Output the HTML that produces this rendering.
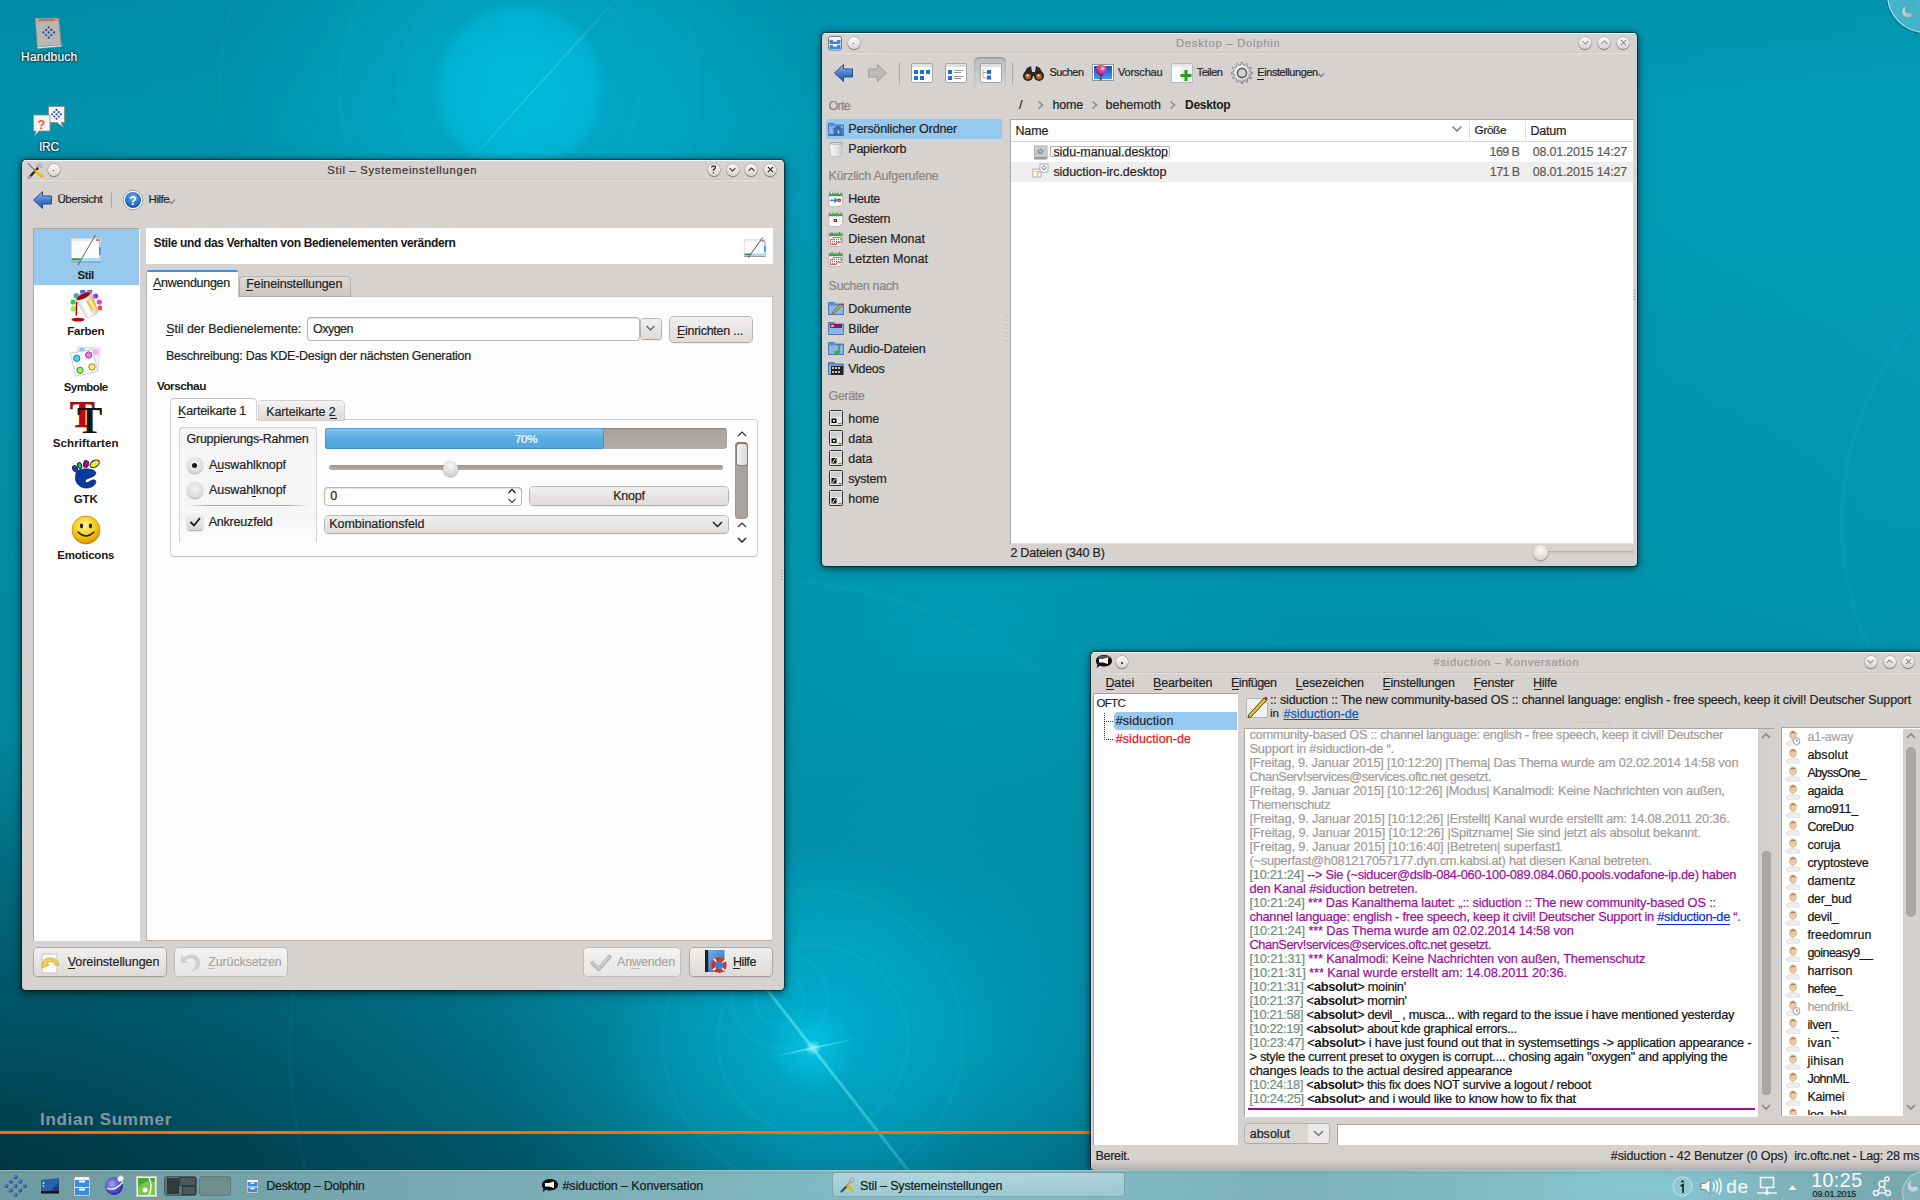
<!DOCTYPE html>
<html><head><meta charset="utf-8">
<style>
*{box-sizing:border-box;margin:0;padding:0}
html,body{width:1920px;height:1200px;overflow:hidden}
body{position:relative;font-family:"Liberation Sans",sans-serif;font-size:12px;color:#231f1e;
background:
 radial-gradient(circle 8px at 813px 1048px, rgba(170,250,255,.85), rgba(60,235,255,0)),
 radial-gradient(circle 45px at 813px 1048px, rgba(0,225,250,.45), rgba(0,220,250,0)),
 radial-gradient(circle 200px at 805px 1040px, rgba(0,195,232,.5), rgba(0,195,232,.25) 60%, rgba(0,195,232,0)),
 radial-gradient(circle 300px at 800px 1030px, rgba(0,190,228,.3), rgba(0,190,228,0)),
 radial-gradient(ellipse 330px 220px at 960px 640px, rgba(0,185,215,.22), rgba(0,185,215,0)),
 radial-gradient(ellipse 260px 300px at 990px 1040px, rgba(0,170,205,.45), rgba(0,170,205,0)),
 radial-gradient(circle 88px at 519px 88px, rgba(0,205,240,.45), rgba(0,205,240,.3) 85%, rgba(0,205,240,0) 100%),
 radial-gradient(ellipse 290px 250px at 519px 90px, rgba(0,195,230,.5), rgba(0,195,230,0)),
 radial-gradient(ellipse 640px 430px at 0px 1170px, rgba(0,22,30,.55), rgba(0,22,30,.28) 55%, rgba(0,22,30,0)),
 linear-gradient(180deg, rgba(0,0,0,0) 0, rgba(0,0,0,0) 1133px, rgba(0,10,20,.15) 1134px),
 linear-gradient(90deg, rgba(0,30,40,.07) 0%, rgba(0,30,40,0) 35%, rgba(0,0,0,0) 75%, rgba(60,210,235,.05) 100%),
 linear-gradient(180deg, #0093ad 0%, #0099b4 10%, #0095ae 40%, #008ea6 62%, #00849c 78%, #007890 90%, #006a7e 100%);
}
.a{position:absolute}
.t{position:absolute;white-space:nowrap;-webkit-text-stroke:0.2px currentColor}
.t[style*="bold"],.t b{-webkit-text-stroke:0}
.win{position:absolute;background:#d6d2d0;border-radius:4px;box-shadow:0 0 1px 1px rgba(0,0,0,.5),0 1px 6px 1px rgba(0,0,0,.45),0 3px 14px rgba(0,0,0,.25)}
.win:before{content:"";position:absolute;left:2px;top:0;right:2px;height:1px;background:rgba(255,255,255,.85)}
.tbsep{position:absolute;height:1px;background:linear-gradient(90deg,rgba(185,181,179,0),rgba(185,181,179,.55) 8%,rgba(185,181,179,.55) 92%,rgba(185,181,179,0))}
.tbsep:after{content:"";position:absolute;left:0;right:0;top:1px;height:1px;background:rgba(255,255,255,.35)}
.cb{position:absolute;width:12px;height:12px;border-radius:50%;background:linear-gradient(180deg,#fbfbfa 0,#eceae9 45%,#d5d1cf 100%);box-shadow:0 1px 1.2px rgba(0,0,0,.38),0 0 0 .7px rgba(125,120,117,.4)}
.btn{position:absolute;border-radius:4px;background:linear-gradient(180deg,#f1f0ef,#dedbd9);box-shadow:0 0 0 1px rgba(150,146,143,.65),0 1px 2px rgba(0,0,0,.18)}
.btnd{position:absolute;border-radius:4px;background:linear-gradient(180deg,#f3f2f1,#e8e6e5);box-shadow:0 0 0 1px rgba(170,166,163,.5)}
.inp{position:absolute;background:#fff;border-radius:3px;box-shadow:inset 0 1px 1px rgba(0,0,0,.12),0 0 0 1px rgba(160,156,153,.75)}
u{text-decoration:none;border-bottom:1px solid currentColor}
</style></head><body>
<div class="a" style="left:813px;top:1048px;width:520px;height:3px;margin-left:-260px;margin-top:-1.5px;transform:rotate(52deg);background:linear-gradient(90deg,rgba(120,240,255,0),rgba(120,240,255,.55) 50%,rgba(120,240,255,0))"></div>
<div class="a" style="left:813px;top:1048px;width:90px;height:2px;margin-left:-45px;margin-top:-1px;transform:rotate(-12deg);background:linear-gradient(90deg,rgba(150,250,255,0),rgba(150,250,255,.6) 50%,rgba(150,250,255,0))"></div>
<div class="a" style="left:718px;top:945px;width:190px;height:190px;border-radius:50%;box-shadow:0 0 3px 1px rgba(100,230,255,0.1), inset 0 0 3px 1px rgba(100,230,255,0.1)"></div>
<div class="a" style="left:663px;top:890px;width:300px;height:300px;border-radius:50%;box-shadow:0 0 3px 1px rgba(100,230,255,0.08), inset 0 0 3px 1px rgba(100,230,255,0.08)"></div>
<div class="a" style="left:732px;top:952px;width:96px;height:96px;border-radius:50%;box-shadow:0 0 3px 1px rgba(100,230,255,0.1), inset 0 0 3px 1px rgba(100,230,255,0.1)"></div>
<div class="a" style="left:755px;top:975px;width:50px;height:50px;border-radius:50%;box-shadow:0 0 3px 1px rgba(100,230,255,0.1), inset 0 0 3px 1px rgba(100,230,255,0.1)"></div>
<div class="a" style="left:290px;top:580px;width:940px;height:940px;border-radius:50%;box-shadow:0 0 3px 1px rgba(100,230,255,0.07), inset 0 0 3px 1px rgba(100,230,255,0.07)"></div>
<div class="a" style="left:220px;top:-212px;width:600px;height:600px;border-radius:50%;box-shadow:0 0 3px 1px rgba(100,230,255,0.05), inset 0 0 3px 1px rgba(100,230,255,0.05)"></div>
<div class="a" style="left:542px;top:80px;width:230px;height:1.5px;margin-left:-115px;transform:rotate(-47.8deg);background:linear-gradient(90deg,rgba(90,220,250,0),rgba(90,220,250,.32) 30%,rgba(90,220,250,.32) 70%,rgba(90,220,250,0))"></div>
<div class="a" style="left:339px;top:-92px;width:360px;height:360px;border-radius:50%;box-shadow:0 0 4px 1px rgba(100,230,255,0.07), inset 0 0 4px 1px rgba(100,230,255,0.07)"></div>
<div class="a" style="left:399px;top:-32px;width:240px;height:240px;border-radius:50%;box-shadow:0 0 4px 1px rgba(100,230,255,0.06), inset 0 0 4px 1px rgba(100,230,255,0.06)"></div>
<div class="a" style="left:1842px;top:214px;width:616px;height:616px;border-radius:50%;box-shadow:0 0 3px 1px rgba(100,220,245,.10), inset 0 0 3px 1px rgba(100,220,245,.10)"></div>
<div class="a" style="left:0;top:1131px;width:1920px;height:3px;background:#ff6c00"></div>
<div class="t" style="left:40.00px;top:1111.20px;font-size:17px;line-height:17px;font-weight:bold;color:#8796a3;letter-spacing:0.707px;">Indian Summer</div>
<div class="win" style="left:22px;top:160px;width:762px;height:830px"></div>
<div class="tbsep" style="left:30px;top:179px;width:746px"></div>
<svg class="a" style="left:27px;top:162px" width="18" height="18" viewBox="0 0 18 18">
<path d="M1 1.3 L8 8.3" stroke="#9a9a9a" stroke-width="1.1"/><path d="M1.3 1.6 L7.5 7.8" stroke="#333" stroke-width=".5"/>
<path d="M10.6 6.4 L2 15.6" stroke="#2a2a2a" stroke-width="2.3" stroke-linecap="round"/><path d="M3 14.6 L2 15.6" stroke="#aaa" stroke-width="2.3" stroke-linecap="round"/>
<path d="M10.2 5.2 A2.6 2.6 0 1 1 14.6 5.6 L13 5 L12.6 3.2 Z" fill="#d8d8d8" stroke="#8a8a8a" stroke-width=".7"/>
<path d="M8.6 9 L15 14.3" stroke="#e8b400" stroke-width="2.8" stroke-linecap="round"/><path d="M9.5 9.3 L14.5 13.4" stroke="#ffe060" stroke-width=".8" stroke-linecap="round"/>
</svg>
<div class="cb" style="left:47.50px;top:163.60px"></div><div class="a" style="left:52.60px;top:169.70px;width:1.8px;height:1.8px;border-radius:50%;background:#1a1a1a"></div>
<div class="t" style="left:327.30px;top:164.60px;font-size:11.2px;line-height:11.2px;color:#3a3130;letter-spacing:0.722px;">Stil – Systemeinstellungen</div>
<div class="cb" style="left:707.60px;top:163.50px"></div><svg class="a" style="left:707.10px;top:163.00px" width="13" height="13"><path d="M4.6 4.6 Q4.8 2.8 6.6 2.8 Q8.5 2.9 8.4 4.6 Q8.3 5.7 6.9 6.4 Q6.4 6.8 6.4 7.8 M6.4 9.2 L6.4 10.2" fill="none" stroke="#2a2a2a" stroke-width="1.35"/></svg>
<div class="cb" style="left:726.60px;top:163.50px"></div><svg class="a" style="left:726.10px;top:163.00px" width="13" height="13"><path d="M3.6 5.2 L6.5 8.1 L9.4 5.2" fill="none" stroke="#2a2a2a" stroke-width="1.05"/></svg>
<div class="cb" style="left:745.30px;top:163.50px"></div><svg class="a" style="left:744.80px;top:163.00px" width="13" height="13"><path d="M3.6 7.8 L6.5 4.9 L9.4 7.8" fill="none" stroke="#2a2a2a" stroke-width="1.05"/></svg>
<div class="cb" style="left:764.30px;top:163.50px"></div><svg class="a" style="left:763.80px;top:163.00px" width="13" height="13"><path d="M3.9 3.9 L9.1 9.1 M9.1 3.9 L3.9 9.1" fill="none" stroke="#2a2a2a" stroke-width="1.05"/></svg>
<svg class="a" style="left:32px;top:190px" width="21" height="20" viewBox="0 0 21 20">
<defs><linearGradient id="gArr" x1="0" y1="0" x2="0" y2="1"><stop offset="0" stop-color="#9cc0ee"/><stop offset=".5" stop-color="#4a7fcf"/><stop offset="1" stop-color="#1d4f9c"/></linearGradient></defs>
<path d="M1.5 10 L10.5 1.5 L10.5 6 L19.5 6 L19.5 14 L10.5 14 L10.5 18.5 Z" fill="url(#gArr)" stroke="#2a4f86" stroke-width="1"/>
</svg>
<div class="t" style="left:57.40px;top:193.65px;font-size:11.5px;line-height:11.5px;letter-spacing:-0.398px;">Übersicht</div>
<div class="a" style="left:111px;top:189px;width:1px;height:22px;background:linear-gradient(180deg,rgba(160,155,152,0),#a9a5a2 30%,#a9a5a2 70%,rgba(160,155,152,0))"></div>
<svg class="a" style="left:122px;top:189px" width="22" height="22" viewBox="0 0 22 22">
<defs><radialGradient id="gHelp" cx=".5" cy=".35" r=".6"><stop offset="0" stop-color="#6fb2f2"/><stop offset="1" stop-color="#1358b7"/></radialGradient></defs>
<circle cx="11" cy="11" r="9.8" fill="#fff" stroke="#8a8a8a" stroke-width=".8"/>
<circle cx="11" cy="11" r="8" fill="url(#gHelp)"/>
<text x="11" y="15.5" font-family="Liberation Sans" font-weight="bold" font-size="12" fill="#fff" text-anchor="middle">?</text>
</svg>
<div class="t" style="left:148.60px;top:193.65px;font-size:11.5px;line-height:11.5px;letter-spacing:-0.503px;">Hilfe</div>
<svg class="a" style="left:168px;top:199px" width="8" height="6"><path d="M1 2 L3.5 4.5 L7 .5" fill="none" stroke="#777" stroke-width="1.1"/></svg>
<div class="a" style="left:33px;top:228px;width:107px;height:713px;background:#fff;box-shadow:inset 1px 1px 0 #a6a8a5"></div>
<div class="a" style="left:34px;top:229px;width:105px;height:56px;background:#97c8ee"></div>
<div class="t" style="left:77.45px;top:269.95px;font-size:11.5px;line-height:11.5px;font-weight:bold;color:#1a1716;letter-spacing:-0.348px;">Stil</div>
<div class="t" style="left:67.20px;top:325.95px;font-size:11.5px;line-height:11.5px;font-weight:bold;color:#1a1716;letter-spacing:-0.224px;">Farben</div>
<div class="t" style="left:63.70px;top:381.95px;font-size:11.5px;line-height:11.5px;font-weight:bold;color:#1a1716;letter-spacing:-0.562px;">Symbole</div>
<div class="t" style="left:52.70px;top:437.95px;font-size:11.5px;line-height:11.5px;font-weight:bold;color:#1a1716;letter-spacing:0.121px;">Schriftarten</div>
<div class="t" style="left:73.70px;top:493.95px;font-size:11.5px;line-height:11.5px;font-weight:bold;color:#1a1716;letter-spacing:-0.094px;">GTK</div>
<div class="t" style="left:57.20px;top:549.95px;font-size:11.5px;line-height:11.5px;font-weight:bold;color:#1a1716;letter-spacing:-0.200px;">Emoticons</div>
<svg class="a" style="left:70px;top:234px" width="32" height="32" viewBox="0 0 32 32">
<rect x="1.2" y="4.6" width="29.6" height="23" fill="#fbfbfb" stroke="#cfcfcf" stroke-width=".7"/>
<rect x="1.5" y="4.9" width="29" height="2.3" fill="#ececec"/><rect x="26" y="5.2" width="4" height="1.6" fill="#e05a5a"/>
<rect x="29" y="7.2" width="1.8" height="19.5" fill="#a8cfee"/><rect x="29" y="13" width="1.8" height="8" fill="#4a90d8"/>
<rect x="1.5" y="24" width="29" height="3.4" fill="#a8dcf4"/><rect x="1.5" y="24.3" width="9" height="2" fill="#3a9a3a"/>
<rect x="1.2" y="27.4" width="29.6" height="1" fill="#8a8a8a"/>
<line x1="8" y1="31" x2="25.5" y2="1" stroke="#555" stroke-width=".9"/>
</svg>
<svg class="a" style="left:70px;top:290px" width="32" height="32" viewBox="0 0 32 32">
<defs><linearGradient id="gBk" x1="0" y1="0" x2="1" y2="0"><stop offset="0" stop-color="#d8d8d8"/><stop offset=".35" stop-color="#ffffff"/><stop offset="1" stop-color="#bdbdbd"/></linearGradient>
<linearGradient id="gGold" x1="0" y1="0" x2="1" y2="0"><stop offset="0" stop-color="#e8b010"/><stop offset=".5" stop-color="#fff0b0"/><stop offset="1" stop-color="#d8a000"/></linearGradient></defs>
<circle cx="12.7" cy="1.8" r="2.6" fill="#4a60e0"/><circle cx="19.7" cy="1.8" r="2.6" fill="#7a48d0"/><circle cx="25.7" cy="6" r="2.6" fill="#9040c8"/><circle cx="29.3" cy="12" r="2.6" fill="#d848c8"/><circle cx="30" cy="18" r="2.4" fill="#f04848"/>
<circle cx="6.3" cy="5.7" r="2.6" fill="#30b0b0"/><circle cx="3" cy="12" r="2.6" fill="#30d040"/><circle cx="3.2" cy="18.7" r="2.6" fill="#a0f040"/>
<g transform="translate(13.3,5.7) rotate(-25.6)">
<path d="M-8.5 0 L-6.8 20 A6.8 2.4 0 0 0 6.8 20 L8.5 0 Z" fill="url(#gBk)" stroke="#b8b8b8" stroke-width=".5"/>
<path d="M0.5 6 L8 6 L7 17.5 L1 17.5 Z" fill="url(#gGold)"/>
<ellipse cx="0" cy="0" rx="8.5" ry="3" fill="#a8a8a8"/><ellipse cx="0" cy=".4" rx="7.4" ry="2.4" fill="#a00010"/>
</g>
<path d="M6.6 12.5 L6.3 25" stroke="#b00010" stroke-width="1.5" stroke-linecap="round"/>
<ellipse cx="8" cy="29.6" rx="6.5" ry="1.9" fill="#c00010"/>
</svg>
<svg class="a" style="left:70px;top:346px" width="32" height="32" viewBox="0 0 32 32">
<path d="M7.3 1 L30.3 2 L28 25.3 L10 26 Z" fill="#f2f2f2" stroke="#d0d0d0" stroke-width=".7"/>
<circle cx="12" cy="4.5" r="3" fill="#6ab8f0" opacity=".7"/><circle cx="25.7" cy="6" r="3" fill="#f0b0f0"/>
<path d="M.3 7 L22.7 3.7 L27.7 25.3 L5.7 30.3 Z" fill="#fbfbfb" stroke="#c4c4c4" stroke-width=".8"/>
<circle cx="6.7" cy="12.3" r="3.2" fill="#48d0f8" stroke="#2060a0" stroke-width=".8"/>
<circle cx="18.7" cy="9" r="3.2" fill="#f070f0" stroke="#803080" stroke-width=".8"/>
<circle cx="10" cy="24.3" r="3.2" fill="#98f060" stroke="#407020" stroke-width=".8"/>
<circle cx="22" cy="21" r="3.2" fill="#f8f070" stroke="#707020" stroke-width=".8"/>
</svg>
<svg class="a" style="left:70px;top:402px" width="32" height="32" viewBox="0 0 32 32">
<text x="0" y="25.3" font-family="Liberation Serif" font-weight="bold" font-size="37" fill="#c40810" stroke="#6a0000" stroke-width=".6">T</text>
<text x="7" y="30.8" font-family="Liberation Serif" font-weight="bold" font-size="38" fill="#151515">T</text>
</svg>
<svg class="a" style="left:70px;top:458px" width="32" height="32" viewBox="0 0 32 32">
<path d="M6 15 C6.5 10 23 9.5 25.5 14 C27.5 18 19.5 19.5 16.8 21 C14.3 22.4 15 25.6 18.2 24.2 C20 23.3 22 21.6 24.5 22 C27.5 23 25.5 28.5 18.5 29.8 C11.5 31 4.8 26 5.6 19 Z" fill="#0a3aa0" stroke="#001a80" stroke-width=".8"/>
<ellipse cx="5" cy="10.5" rx="2.3" ry="3" transform="rotate(-30 5 10.5)" fill="#443880" stroke="#1a1a90" stroke-width="1"/>
<ellipse cx="9.6" cy="7.6" rx="2.1" ry="3" transform="rotate(-15 9.6 7.6)" fill="#20c030" stroke="#1a1a90" stroke-width="1"/>
<ellipse cx="16" cy="6" rx="2.5" ry="3.4" transform="rotate(10 16 6)" fill="#d00060" stroke="#1a1a90" stroke-width="1"/>
<ellipse cx="24.7" cy="5.8" rx="5" ry="3.2" transform="rotate(-32 24.7 5.8)" fill="#f8f000" stroke="#101080" stroke-width="1.1"/>
</svg>
<svg class="a" style="left:70px;top:514px" width="32" height="32" viewBox="0 0 32 32">
<defs><radialGradient id="gSm" cx=".45" cy=".35" r=".65"><stop offset="0" stop-color="#fff6a0"/><stop offset=".6" stop-color="#f5cc10"/><stop offset="1" stop-color="#d89000"/></radialGradient></defs>
<circle cx="16" cy="16" r="14" fill="url(#gSm)" stroke="#b07800" stroke-width=".6"/>
<ellipse cx="11.5" cy="12" rx="1.6" ry="2.4" fill="#222"/><ellipse cx="20.5" cy="12" rx="1.6" ry="2.4" fill="#222"/>
<path d="M8 18 Q16 26 24 18" fill="none" stroke="#222" stroke-width="1.6" stroke-linecap="round"/>
</svg>
<div class="a" style="left:146px;top:228px;width:627px;height:36px;background:#fff"></div>
<div class="t" style="left:153.50px;top:236.70px;font-size:12px;line-height:12px;font-weight:bold;color:#1a1716;letter-spacing:-0.354px;">Stile und das Verhalten von Bedienelementen verändern</div>
<svg class="a" style="left:743px;top:236px" width="24" height="22" viewBox="0 0 24 22">
<rect x="1.2" y="3.8" width="21.6" height="16.6" fill="#fbfbfb" stroke="#d0d0d0" stroke-width=".7"/>
<rect x="1.5" y="4" width="21" height="1.6" fill="#ececec"/><rect x="18.5" y="4.2" width="3.2" height="1.3" fill="#e05a5a"/>
<rect x="21" y="5.6" width="1.6" height="14.5" fill="#a8cfee"/><rect x="21" y="10" width="1.6" height="6" fill="#4a90d8"/>
<rect x="1.5" y="17.4" width="21" height="2.6" fill="#a8dcf4"/><rect x="1.5" y="17.6" width="6" height="1.6" fill="#3a9a3a"/>
<rect x="1.2" y="20" width="21.6" height=".8" fill="#8a8a8a"/>
<line x1="5.2" y1="21.8" x2="19.8" y2="1.2" stroke="#444" stroke-width=".9"/></svg>
<div class="a" style="left:146px;top:296px;width:627px;height:645px;background:#fcfcfc;box-shadow:inset 1px 0 0 #b9b5b3, inset 0 1px 0 #c9c5c3, inset -1px 0 0 #c9c5c3, inset 0 -1px 0 #b5b1ae"></div>
<div class="a" style="left:239px;top:276px;width:112px;height:21px;border-radius:4px 4px 0 0;background:linear-gradient(180deg,#dedbd9,#c9c5c3);box-shadow:inset 0 0 0 1px rgba(150,146,143,.55)"></div>
<div class="a" style="left:146px;top:270px;width:93px;height:27px;border-radius:4px 4px 0 0;background:linear-gradient(180deg,#fff,#fcfcfc);box-shadow:inset 1px 0 0 #b9b5b3, inset -1px 0 0 #c9c5c3"></div>
<div class="a" style="left:147px;top:270px;width:91px;height:2px;border-radius:3px 3px 0 0;background:#3d8de0"></div>
<div class="t" style="left:153.00px;top:277.35px;font-size:12.5px;line-height:12.5px;letter-spacing:-0.267px;">Anwendungen</div>
<div class="a" style="left:153px;top:289px;width:8px;height:1px;background:#222"></div>
<div class="t" style="left:246.30px;top:277.95px;font-size:12.5px;line-height:12.5px;letter-spacing:-0.118px;">Feineinstellungen</div>
<div class="a" style="left:246px;top:290px;width:7px;height:1px;background:#222"></div>
<div class="t" style="left:166.30px;top:323.35px;font-size:12.5px;line-height:12.5px;letter-spacing:-0.050px;">Stil der Bedienelemente:</div>
<div class="a" style="left:166px;top:335px;width:7px;height:1px;background:#222"></div>
<div class="inp" style="left:308px;top:318px;width:331px;height:22px"></div>
<div class="t" style="left:313.00px;top:323.35px;font-size:12.5px;line-height:12.5px;letter-spacing:-0.516px;">Oxygen</div>
<div class="btn" style="left:640.5px;top:318.5px;width:20px;height:20px;border-radius:3px"></div>
<svg class="a" style="left:644px;top:323px" width="13" height="10"><path d="M2.5 3 L6.5 7 L10.5 3" fill="none" stroke="#666" stroke-width="1.4"/></svg>
<div class="btn" style="left:669.5px;top:316.5px;width:82px;height:25px"></div>
<div class="t" style="left:676.90px;top:324.65px;font-size:12.5px;line-height:12.5px;letter-spacing:-0.249px;">Einrichten ...</div>
<div class="a" style="left:677px;top:337px;width:7px;height:1px;background:#222"></div>
<div class="t" style="left:166.00px;top:350.25px;font-size:12.5px;line-height:12.5px;letter-spacing:-0.268px;">Beschreibung: Das KDE-Design der nächsten Generation</div>
<div class="t" style="left:156.90px;top:381.40px;font-size:11.8px;line-height:11.8px;font-weight:bold;color:#1a1716;letter-spacing:-0.486px;">Vorschau</div>
<div class="a" style="left:170.5px;top:420px;width:586px;height:136px;background:#fdfdfd;border-radius:0 3px 3px 3px;box-shadow:0 0 0 1px rgba(175,171,168,.55),0 1px 1px rgba(0,0,0,.15)"></div>
<div class="a" style="left:258.7px;top:400.6px;width:85px;height:19.5px;border-radius:4px 4px 0 0;background:linear-gradient(180deg,#f5f4f3,#dcd9d7);box-shadow:0 0 0 1px rgba(175,171,168,.55)"></div>
<div class="a" style="left:170.6px;top:398.7px;width:85px;height:22.5px;border-radius:4px 4px 0 0;background:#fdfdfd;box-shadow:-1px -1px 0 0 rgba(175,171,168,.5),1px -1px 0 0 rgba(175,171,168,.5)"></div>
<div class="t" style="left:178.10px;top:405.35px;font-size:12.5px;line-height:12.5px;letter-spacing:-0.221px;">Karteikarte 1</div>
<div class="a" style="left:178px;top:417px;width:7px;height:1px;background:#222"></div>
<div class="t" style="left:266.20px;top:405.65px;font-size:12.5px;line-height:12.5px;letter-spacing:-0.113px;">Karteikarte 2</div>
<div class="a" style="left:330px;top:418px;width:7px;height:1px;background:#222"></div>
<div class="a" style="left:178.6px;top:427.3px;width:138.7px;height:115px;border-radius:4px 4px 0 0;background:linear-gradient(180deg,#f6f5f5 0,#f7f6f6 80%,rgba(250,250,250,0) 100%);box-shadow:inset 1px 1px 0 rgba(190,186,183,.6), inset -1px 0 0 rgba(190,186,183,.6)"></div>
<div class="t" style="left:186.60px;top:433.45px;font-size:12.5px;line-height:12.5px;letter-spacing:-0.282px;">Gruppierungs-Rahmen</div>
<div class="a" style="left:186.5px;top:457.3px;width:16px;height:16px;border-radius:50%;background:radial-gradient(circle at 50% 40%,#f4f3f2 0,#dcd8d6 70%,#c9c5c3 100%);box-shadow:0 1px 1.5px rgba(0,0,0,.35)"></div>
<div class="a" style="left:191.9px;top:462.7px;width:5.2px;height:5.2px;border-radius:50%;background:#151515"></div>
<div class="a" style="left:186.5px;top:482.3px;width:16px;height:16px;border-radius:50%;background:radial-gradient(circle at 50% 40%,#f4f3f2 0,#dcd8d6 70%,#c9c5c3 100%);box-shadow:0 1px 1.5px rgba(0,0,0,.35)"></div>
<div class="t" style="left:209.00px;top:459.05px;font-size:12.5px;line-height:12.5px;letter-spacing:-0.069px;">Auswahlknopf</div>
<div class="a" style="left:216px;top:471px;width:7px;height:1px;background:#222"></div>
<div class="t" style="left:209.00px;top:483.75px;font-size:12.5px;line-height:12.5px;letter-spacing:-0.069px;">Auswahlknopf</div>
<div class="a" style="left:252px;top:496px;width:4px;height:1px;background:#222"></div>
<div class="a" style="left:186px;top:505px;width:124px;height:1px;background:linear-gradient(90deg,rgba(150,146,143,0),rgba(150,146,143,.8) 20%,rgba(150,146,143,.8) 80%,rgba(150,146,143,0))"></div>
<div class="a" style="left:186.5px;top:514px;width:16px;height:15.5px;border-radius:3px;background:linear-gradient(180deg,#f3f2f1,#d9d5d3);box-shadow:0 1px 1.5px rgba(0,0,0,.35)"></div>
<svg class="a" style="left:187px;top:514px" width="16" height="16"><path d="M3.5 8 L7 11.5 L13 4" fill="none" stroke="#1a1a1a" stroke-width="1.8"/></svg>
<div class="t" style="left:208.70px;top:516.25px;font-size:12.5px;line-height:12.5px;letter-spacing:-0.201px;">Ankreuzfeld</div>
<div class="a" style="left:325.3px;top:428.3px;width:401.5px;height:20.5px;border-radius:3px;background:linear-gradient(180deg,#a8a19e,#b3adaa);box-shadow:inset 0 1px 1px rgba(0,0,0,.2)"></div>
<div class="a" style="left:325.3px;top:428.3px;width:279px;height:20.5px;border-radius:3px;background:linear-gradient(180deg,#8cc6ee 0,#5aaee2 45%,#50a4dc 100%);box-shadow:inset 0 0 0 1px rgba(40,120,190,.5)"></div>
<div class="t" style="left:514.90px;top:433.85px;font-size:11.5px;line-height:11.5px;color:#fff;letter-spacing:-0.177px;">70%</div>
<div class="a" style="left:329px;top:465px;width:394px;height:5px;border-radius:3px;background:linear-gradient(180deg,#9c9692,#b5b0ad);box-shadow:0 1px 0 rgba(255,255,255,.6)"></div>
<div class="a" style="left:443px;top:460.5px;width:15px;height:15px;border-radius:50%;background:radial-gradient(circle at 50% 35%,#fafafa,#d4d0ce 75%);box-shadow:0 1px 2px rgba(0,0,0,.4)"></div>
<div class="inp" style="left:325.3px;top:487.5px;width:196px;height:17px"></div>
<div class="t" style="left:330.30px;top:490.15px;font-size:12.5px;line-height:12.5px;letter-spacing:0.047px;">0</div>
<svg class="a" style="left:506px;top:487px" width="12" height="18"><path d="M2.5 6 L6 2.5 L9.5 6" fill="none" stroke="#222" stroke-width="1.3"/><path d="M2.5 12 L6 15.5 L9.5 12" fill="none" stroke="#444" stroke-width="1.1"/></svg>
<div class="btn" style="left:529.5px;top:487px;width:198px;height:17.5px"></div>
<div class="t" style="left:613.20px;top:490.25px;font-size:12.5px;line-height:12.5px;letter-spacing:-0.234px;">Knopf</div>
<div class="btn" style="left:324.5px;top:516.3px;width:403px;height:17px"></div>
<div class="t" style="left:329.20px;top:517.95px;font-size:12.5px;line-height:12.5px;letter-spacing:-0.038px;">Kombinationsfeld</div>
<svg class="a" style="left:711px;top:519px" width="13" height="10"><path d="M2 3 L6.5 7.5 L11 3" fill="none" stroke="#222" stroke-width="1.5"/></svg>
<svg class="a" style="left:736px;top:429px" width="12" height="10"><path d="M2 7 L6 3 L10 7" fill="none" stroke="#333" stroke-width="1.2"/></svg>
<div class="a" style="left:735.4px;top:442.2px;width:12.5px;height:77px;border-radius:4px;background:#aaa39f;box-shadow:inset 0 1px 2px rgba(0,0,0,.3)"></div>
<div class="a" style="left:737px;top:443.5px;width:9.5px;height:21px;border-radius:3px;background:linear-gradient(90deg,#f5f4f3,#dcd9d7);box-shadow:0 0 0 1px rgba(100,95,92,.5)"></div>
<svg class="a" style="left:736px;top:520px" width="12" height="10"><path d="M2 7 L6 3 L10 7" fill="none" stroke="#333" stroke-width="1.2"/></svg>
<svg class="a" style="left:736px;top:535px" width="12" height="10"><path d="M2 3 L6 7 L10 3" fill="none" stroke="#222" stroke-width="1.5"/></svg>
<div class="a" style="left:781px;top:570px;width:1px;height:12px;background:repeating-linear-gradient(180deg,#8a8683 0,#8a8683 1px,transparent 1px,transparent 3px)"></div>
<div class="btn" style="left:34.2px;top:948px;width:131.5px;height:27.8px"></div>
<svg class="a" style="left:39px;top:951px" width="24" height="24" viewBox="0 0 24 24">
<rect x="3" y="3" width="15" height="19" fill="#fafafa" stroke="#bbb" stroke-width=".8"/>
<path d="M3 13 Q5 6 12 7 Q19 8 20 14 L16 14 Q15 10 11 10.5 Q8 11 8 13 L10 14 L3 17 Z" fill="#ecd060" stroke="#c8a020" stroke-width=".7"/>
</svg>
<div class="t" style="left:67.70px;top:956.15px;font-size:12.5px;line-height:12.5px;letter-spacing:-0.046px;">Voreinstellungen</div>
<div class="a" style="left:68px;top:968px;width:7px;height:1px;background:#222"></div>
<div class="btnd" style="left:174.6px;top:948px;width:112.8px;height:27.8px"></div>
<svg class="a" style="left:179px;top:950px" width="26" height="24" viewBox="0 0 26 24">
<path d="M2 5 L2 13 L9 13 L6.5 10.5 Q10 7 14 9 Q18 11 16 17 Q15 20 12 21 Q19 21 21 15 Q22 8 16 5 Q10 3 5 7.5 Z" fill="#d2d0ce"/>
</svg>
<div class="t" style="left:208.30px;top:956.15px;font-size:12.5px;line-height:12.5px;color:#a9a5a3;letter-spacing:-0.153px;">Zurücksetzen</div>
<div class="a" style="left:208px;top:968px;width:7px;height:1px;background:#bbb"></div>
<div class="btnd" style="left:584px;top:948px;width:96px;height:27.8px"></div>
<svg class="a" style="left:590px;top:952px" width="22" height="20"><path d="M2.5 11 L8.5 17 L19.5 5" fill="none" stroke="#bdbbb9" stroke-width="4.2" stroke-linecap="round" stroke-linejoin="round"/><path d="M3 10.5 L8.5 16 L19 4.8" fill="none" stroke="#d4d2d0" stroke-width="1.5" stroke-linecap="round"/></svg>
<div class="t" style="left:617.00px;top:956.15px;font-size:12.5px;line-height:12.5px;color:#a9a5a3;letter-spacing:-0.135px;">Anwenden</div>
<div class="a" style="left:631px;top:968px;width:9px;height:1px;background:#bbb"></div>
<div class="btn" style="left:689.6px;top:948px;width:82px;height:27.8px"></div>
<svg class="a" style="left:704px;top:949px" width="24" height="25" viewBox="0 0 24 25">
<defs><linearGradient id="gBook" x1="0" y1="0" x2="1" y2="1"><stop offset="0" stop-color="#7ab4ea"/><stop offset="1" stop-color="#2a6ab8"/></linearGradient></defs>
<rect x="1" y="1" width="19.5" height="22" fill="url(#gBook)"/><rect x="1" y="1" width="3.2" height="22" fill="#1e1e1e"/>
<circle cx="15" cy="16" r="6" fill="#3a80c8"/>
<circle cx="15" cy="16" r="6" fill="none" stroke="#d83020" stroke-width="3.4"/>
<circle cx="15" cy="16" r="6" fill="none" stroke="#f4f4f4" stroke-width="3.6" stroke-dasharray="1.6 7.82" stroke-dashoffset="5.5"/>
</svg>
<div class="t" style="left:733.00px;top:956.15px;font-size:12.5px;line-height:12.5px;letter-spacing:-0.403px;">Hilfe</div>
<div class="a" style="left:733px;top:968px;width:7px;height:1px;background:#222"></div>
<div class="win" style="left:822px;top:33px;width:815px;height:533px"></div>
<div class="tbsep" style="left:830px;top:52px;width:799px"></div>
<svg class="a" style="left:827px;top:35px" width="16" height="16" viewBox="0 0 16 16">
<rect x="1.5" y="1.5" width="13" height="13.5" rx="2" fill="#f4f4f4" stroke="#7a7a7a"/>
<rect x="2.5" y="5" width="11" height="4" fill="#3a86e0"/><rect x="2.5" y="10" width="11" height="4" fill="#3a86e0"/>
<rect x="6" y="5" width="4" height="1.5" fill="#fff"/><rect x="6" y="10" width="4" height="1.5" fill="#fff"/></svg>
<div class="cb" style="left:847.50px;top:36.60px"></div><div class="a" style="left:852.60px;top:42.70px;width:1.8px;height:1.8px;border-radius:50%;background:#1a1a1a"></div>
<div class="t" style="left:1176.00px;top:37.60px;font-size:11.2px;line-height:11.2px;color:#9a9693;letter-spacing:0.769px;">Desktop – Dolphin</div>
<div class="cb" style="left:1579.40px;top:36.60px"></div><svg class="a" style="left:1578.90px;top:36.10px" width="13" height="13"><path d="M3.6 5.2 L6.5 8.1 L9.4 5.2" fill="none" stroke="#8d8986" stroke-width="1.05"/></svg>
<div class="cb" style="left:1598.20px;top:36.60px"></div><svg class="a" style="left:1597.70px;top:36.10px" width="13" height="13"><path d="M3.6 7.8 L6.5 4.9 L9.4 7.8" fill="none" stroke="#8d8986" stroke-width="1.05"/></svg>
<div class="cb" style="left:1617.30px;top:36.60px"></div><svg class="a" style="left:1616.80px;top:36.10px" width="13" height="13"><path d="M3.9 3.9 L9.1 9.1 M9.1 3.9 L3.9 9.1" fill="none" stroke="#8d8986" stroke-width="1.05"/></svg>
<svg class="a" style="left:833px;top:63px" width="21" height="20" viewBox="0 0 21 20">
<path d="M1.5 10 L10.5 1.5 L10.5 6 L19.5 6 L19.5 14 L10.5 14 L10.5 18.5 Z" fill="url(#gArr)" stroke="#2a4f86" stroke-width="1"/></svg>
<svg class="a" style="left:867px;top:63px" width="21" height="20" viewBox="0 0 21 20">
<path d="M19.5 10 L10.5 1.5 L10.5 6 L1.5 6 L1.5 14 L10.5 14 L10.5 18.5 Z" fill="#bdbab8" stroke="#a19e9c" stroke-width="1"/></svg>
<div class="a" style="left:899px;top:62px;width:1px;height:22px;background:#aaa6a3"></div>
<div class="a" style="left:1012px;top:62px;width:1px;height:22px;background:#aaa6a3"></div>
<div class="a" style="left:974px;top:56.5px;width:31.5px;height:32px;border-radius:5px;background:linear-gradient(180deg,#b9bdbb,#d9d6d4);box-shadow:inset 0 1px 2px rgba(0,0,0,.25)"></div>
<svg class="a" style="left:911px;top:63px" width="22" height="20" viewBox="0 0 22 20"><rect x=".5" y=".5" width="21" height="19" rx="1.5" fill="#fff" stroke="#a5a5a5"/><rect x="1" y="1" width="20" height="3" fill="#e0e0e0"/><rect x="3" y="7" width="4" height="4" fill="#1f6fd8"/><rect x="9" y="7" width="4" height="4" fill="#1f6fd8"/><rect x="15" y="7" width="4" height="4" fill="#1f6fd8"/><rect x="3" y="13" width="4" height="4" fill="#1f6fd8"/><rect x="9" y="13" width="4" height="4" fill="#1f6fd8"/></svg>
<svg class="a" style="left:945px;top:63px" width="22" height="20" viewBox="0 0 22 20"><rect x=".5" y=".5" width="21" height="19" rx="1.5" fill="#fff" stroke="#a5a5a5"/><rect x="1" y="1" width="20" height="3" fill="#e0e0e0"/><rect x="3" y="7" width="4" height="4" fill="#1f6fd8"/><rect x="9" y="7" width="9" height="1" fill="#999"/><rect x="9" y="9" width="7" height="1" fill="#999"/><rect x="3" y="13" width="4" height="4" fill="#1f6fd8"/><rect x="9" y="13" width="9" height="1" fill="#999"/><rect x="9" y="15" width="7" height="1" fill="#999"/></svg>
<svg class="a" style="left:979.5px;top:63px" width="22" height="20" viewBox="0 0 22 20"><rect x=".5" y=".5" width="21" height="19" rx="1.5" fill="#fff" stroke="#a5a5a5"/><rect x="1" y="1" width="20" height="3" fill="#e0e0e0"/><path d="M3 6 V15 H7 M3 9.5 H7" fill="none" stroke="#999" stroke-width=".8"/><rect x="7" y="7" width="4" height="4" fill="#1f6fd8"/><rect x="7" y="12.5" width="4" height="4" fill="#1f6fd8"/></svg>
<svg class="a" style="left:1022px;top:64px" width="23" height="18" viewBox="0 0 23 18">
<path d="M5 4 L9 2 L10 8 L13 8 L14 2 L18 4 L22 12 L14 12 L9 12 L1 12 Z" fill="#2a2a2a"/>
<circle cx="6" cy="12" r="5" fill="#222"/><circle cx="17" cy="12" r="5" fill="#222"/>
<circle cx="6" cy="12.5" r="3" fill="#b06020"/><circle cx="17" cy="12.5" r="3" fill="#b06020"/>
<circle cx="5.5" cy="11.5" r="1.2" fill="#f0d0a0"/><circle cx="16.5" cy="11.5" r="1.2" fill="#f0d0a0"/></svg>
<div class="t" style="left:1049.50px;top:67.10px;font-size:11px;line-height:11px;letter-spacing:-0.552px;">Suchen</div>
<svg class="a" style="left:1092px;top:64px" width="22" height="17" viewBox="0 0 22 17">
<defs><linearGradient id="gSky" x1="0" y1="0" x2="0" y2="1"><stop offset="0" stop-color="#1050c8"/><stop offset="1" stop-color="#40a0f0"/></linearGradient>
<radialGradient id="gBal" cx=".65" cy=".3" r=".7"><stop offset="0" stop-color="#ffe060"/><stop offset=".35" stop-color="#e040b0"/><stop offset="1" stop-color="#801070"/></radialGradient></defs>
<rect x=".5" y=".5" width="21" height="16" fill="#fff" stroke="#9a9694"/>
<rect x="2" y="2" width="18" height="13" fill="url(#gSky)"/>
<path d="M3 3 Q9.5 -1 14.5 3 Q15.5 7.5 11 11.5 L9 12.5 L7.5 11.5 Q3 8 3 3 Z" fill="url(#gBal)"/>
<path d="M4 4 Q5 2.5 7 2.3 Q6 5 7.5 7 Q5.5 7 4 4 Z" fill="#a08030" opacity=".7"/>
<path d="M8 12 L8.5 15.5 M10 12 L9 15.5" stroke="#303030" stroke-width=".6"/><rect x="7.6" y="14.5" width="2" height="2" fill="#6a4a20"/>
</svg>
<div class="t" style="left:1118.00px;top:67.10px;font-size:11px;line-height:11px;letter-spacing:-0.172px;">Vorschau</div>
<svg class="a" style="left:1171px;top:63px" width="22" height="20" viewBox="0 0 22 20">
<rect x=".5" y=".5" width="21" height="19" fill="#fdfdfd" stroke="#bbb"/><rect x="1" y="1" width="20" height="2.5" fill="#e5e5e5"/>
<rect x="10" y="4" width="11" height="15" fill="#eee"/><path d="M15 7 V18 M9.5 12.5 H20.5" stroke="#23a020" stroke-width="3"/></svg>
<div class="t" style="left:1196.80px;top:67.10px;font-size:11px;line-height:11px;letter-spacing:-0.542px;">Teilen</div>
<svg class="a" style="left:1231px;top:62px" width="22" height="22" viewBox="0 0 22 22">
<defs><linearGradient id="gGear" x1="0" y1="0" x2="1" y2="1"><stop offset="0" stop-color="#ffffff"/><stop offset=".5" stop-color="#d8d8e0"/><stop offset="1" stop-color="#a8a8b8"/></linearGradient></defs>
<path d="M8.85 2.98 L10.05 2.76 L10.18 0.53 L11.82 0.53 L11.95 2.76 L13.15 2.98 L14.30 3.38 L15.52 1.52 L16.95 2.35 L15.95 4.34 L16.87 5.13 L17.66 6.05 L19.65 5.05 L20.48 6.48 L18.62 7.70 L19.02 8.85 L19.24 10.05 L21.47 10.18 L21.47 11.82 L19.24 11.95 L19.02 13.15 L18.62 14.30 L20.48 15.52 L19.65 16.95 L17.66 15.95 L16.87 16.87 L15.95 17.66 L16.95 19.65 L15.52 20.48 L14.30 18.62 L13.15 19.02 L11.95 19.24 L11.82 21.47 L10.18 21.47 L10.05 19.24 L8.85 19.02 L7.70 18.62 L6.48 20.48 L5.05 19.65 L6.05 17.66 L5.13 16.87 L4.34 15.95 L2.35 16.95 L1.52 15.52 L3.38 14.30 L2.98 13.15 L2.76 11.95 L0.53 11.82 L0.53 10.18 L2.76 10.05 L2.98 8.85 L3.38 7.70 L1.52 6.48 L2.35 5.05 L4.34 6.05 L5.13 5.13 L6.05 4.34 L5.05 2.35 L6.48 1.52 L7.70 3.38 Z" fill="url(#gGear)" stroke="#6a6a6a" stroke-width=".7"/>
<circle cx="11" cy="11" r="6.3" fill="#f6f6f8"/>
<circle cx="11" cy="11" r="4.6" fill="#d6d2d0" stroke="#5a5a62" stroke-width="1.6"/>
</svg>
<div class="t" style="left:1257.30px;top:67.10px;font-size:11px;line-height:11px;letter-spacing:-0.428px;">Einstellungen</div>
<div class="a" style="left:1257px;top:79px;width:7px;height:1px;background:#222"></div>
<svg class="a" style="left:1317px;top:72px" width="8" height="6"><path d="M1 1.5 L4 4.5 L7 1.5" fill="none" stroke="#777" stroke-width="1.1"/></svg>
<div class="t" style="left:1019.00px;top:99.15px;font-size:12.5px;line-height:12.5px;">/</div>
<svg class="a" style="left:1036px;top:100px" width="9" height="10"><path d="M2.5 1.5 L6.5 5 L2.5 8.5" fill="none" stroke="#8d8986" stroke-width="1.6"/></svg>
<div class="t" style="left:1052.40px;top:99.15px;font-size:12.5px;line-height:12.5px;letter-spacing:-0.170px;">home</div>
<svg class="a" style="left:1090px;top:100px" width="9" height="10"><path d="M2.5 1.5 L6.5 5 L2.5 8.5" fill="none" stroke="#8d8986" stroke-width="1.6"/></svg>
<div class="t" style="left:1105.60px;top:99.15px;font-size:12.5px;line-height:12.5px;letter-spacing:-0.026px;">behemoth</div>
<svg class="a" style="left:1168px;top:100px" width="9" height="10"><path d="M2.5 1.5 L6.5 5 L2.5 8.5" fill="none" stroke="#8d8986" stroke-width="1.6"/></svg>
<div class="t" style="left:1185.10px;top:99.40px;font-size:12px;line-height:12px;font-weight:bold;color:#1a1716;letter-spacing:-0.306px;">Desktop</div>
<div class="a" style="left:826.4px;top:119px;width:175.6px;height:19.8px;background:#97c8ee"></div>
<div class="t" style="left:828.60px;top:100.20px;font-size:12.5px;line-height:12.5px;color:#8a8583;letter-spacing:-0.703px;">Orte</div>
<div class="t" style="left:848.30px;top:122.95px;font-size:12.5px;line-height:12.5px;letter-spacing:-0.164px;">Persönlicher Ordner</div>
<div class="t" style="left:848.30px;top:143.05px;font-size:12.5px;line-height:12.5px;letter-spacing:-0.255px;">Papierkorb</div>
<div class="t" style="left:828.60px;top:169.75px;font-size:12.5px;line-height:12.5px;color:#8a8583;letter-spacing:-0.273px;">Kürzlich Aufgerufene</div>
<div class="t" style="left:848.30px;top:192.85px;font-size:12.5px;line-height:12.5px;letter-spacing:-0.352px;">Heute</div>
<div class="t" style="left:848.30px;top:212.85px;font-size:12.5px;line-height:12.5px;letter-spacing:-0.367px;">Gestern</div>
<div class="t" style="left:848.30px;top:232.85px;font-size:12.5px;line-height:12.5px;letter-spacing:-0.052px;">Diesen Monat</div>
<div class="t" style="left:848.30px;top:252.85px;font-size:12.5px;line-height:12.5px;letter-spacing:0.029px;">Letzten Monat</div>
<div class="t" style="left:828.60px;top:279.65px;font-size:12.5px;line-height:12.5px;color:#8a8583;letter-spacing:-0.280px;">Suchen nach</div>
<div class="t" style="left:848.30px;top:303.25px;font-size:12.5px;line-height:12.5px;letter-spacing:-0.104px;">Dokumente</div>
<div class="t" style="left:848.30px;top:323.25px;font-size:12.5px;line-height:12.5px;letter-spacing:-0.245px;">Bilder</div>
<div class="t" style="left:848.30px;top:343.25px;font-size:12.5px;line-height:12.5px;letter-spacing:-0.148px;">Audio-Dateien</div>
<div class="t" style="left:848.30px;top:363.25px;font-size:12.5px;line-height:12.5px;letter-spacing:-0.333px;">Videos</div>
<div class="t" style="left:828.60px;top:390.05px;font-size:12.5px;line-height:12.5px;color:#8a8583;letter-spacing:-0.403px;">Geräte</div>
<div class="t" style="left:848.30px;top:412.95px;font-size:12.5px;line-height:12.5px;letter-spacing:-0.120px;">home</div>
<div class="t" style="left:848.30px;top:432.95px;font-size:12.5px;line-height:12.5px;letter-spacing:-0.061px;">data</div>
<div class="t" style="left:848.30px;top:452.95px;font-size:12.5px;line-height:12.5px;letter-spacing:-0.061px;">data</div>
<div class="t" style="left:848.30px;top:472.95px;font-size:12.5px;line-height:12.5px;letter-spacing:-0.232px;">system</div>
<div class="t" style="left:848.30px;top:492.95px;font-size:12.5px;line-height:12.5px;letter-spacing:-0.120px;">home</div>
<svg class="a" style="left:828px;top:121px" width="16" height="16" viewBox="0 0 16 16"><path d="M.5 2.5 H6 L7.5 4 H15.5 V14.5 H.5 Z" fill="#5f92cf" stroke="#3a6aa8" stroke-width=".8"/><rect x="1" y="5.5" width="14" height="8.5" fill="#8ab6e6"/><path d="M3.6 8.6 L10 4.4 L16 8.6 Z" fill="#3466b0"/><rect x="5.5" y="8.4" width="9" height="5.4" fill="#3a6cb4"/><rect x="9.6" y="9.6" width="1.6" height="3" fill="#b8d4f4"/><rect x="1" y="13.2" width="14.5" height="1" fill="#2a5aa0"/></svg>
<svg class="a" style="left:828px;top:141px" width="16" height="16" viewBox="0 0 16 16"><defs><linearGradient id="gTr" x1="0" x2="1"><stop offset="0" stop-color="#fafafa"/><stop offset=".6" stop-color="#e4e4e4"/><stop offset="1" stop-color="#c8c8c8"/></linearGradient></defs><path d="M1.6 2.5 L2.6 15 Q8 16.4 13.4 15 L14.4 2.5 Z" fill="url(#gTr)" stroke="#b0b0b0" stroke-width=".6"/><ellipse cx="8" cy="2.5" rx="6.4" ry="1.6" fill="#9a9a9a"/><ellipse cx="8" cy="2.7" rx="5.2" ry="1" fill="#d8d8d8"/></svg>
<svg class="a" style="left:828px;top:190.5px" width="16" height="16" viewBox="0 0 16 16"><path d="M.8 2.2 H14.6 V12.6 L12 15.4 H.8 Z" fill="#fbfbfb" stroke="#a8a8a8" stroke-width=".7"/><rect x="1" y="2.2" width="13.4" height="3" fill="#3aa43a"/><rect x="1" y="2.2" width="13.4" height="1" fill="#70c870"/><rect x="2.7" y="1" width="1.6" height="2" fill="#fff" stroke="#777" stroke-width=".4"/><rect x="10.7" y="1" width="1.6" height="2" fill="#fff" stroke="#777" stroke-width=".4"/><path d="M3 7 h.6 M5 7 h.6 M7 7 h.6 M9 7 h.6 M3 11 h.6 M5 11 h.6 M7 11 h.6 M9 11 h.6" stroke="#c8c8c8" stroke-width=".6"/><path d="M11.2 7 h.6 M11.2 9 h.6" stroke="#a070e0" stroke-width=".6"/><path d="M2.2 9.3 H8.3" stroke="#3a7ad0" stroke-width="1.5"/><path d="M6.3 7 L8.8 9.3 L6.3 11.6" stroke="#3a7ad0" stroke-width="1.3" fill="none"/><rect x="9.5" y="7.8" width="3.2" height="3" fill="#d00010"/><rect x="10.6" y="8.8" width="1" height="1" fill="#fff"/></svg>
<svg class="a" style="left:828px;top:210.5px" width="16" height="16" viewBox="0 0 16 16"><path d="M.8 2.2 H14.6 V12.6 L12 15.4 H.8 Z" fill="#fbfbfb" stroke="#a8a8a8" stroke-width=".7"/><rect x="1" y="2.2" width="13.4" height="3" fill="#3aa43a"/><rect x="1" y="2.2" width="13.4" height="1" fill="#70c870"/><rect x="2.7" y="1" width="1.6" height="2" fill="#fff" stroke="#777" stroke-width=".4"/><rect x="10.7" y="1" width="1.6" height="2" fill="#fff" stroke="#777" stroke-width=".4"/><path d="M3 7 h.6 M5 7 h.6 M7 7 h.6 M9 7 h.6 M3 11 h.6 M5 11 h.6 M7 11 h.6 M9 11 h.6" stroke="#c8c8c8" stroke-width=".6"/><path d="M11.2 7 h.6 M11.2 9 h.6" stroke="#a070e0" stroke-width=".6"/><rect x="5.8" y="8" width="3.2" height="3" fill="#d00010"/><rect x="6.9" y="9" width="1" height="1" fill="#fff"/></svg>
<svg class="a" style="left:828px;top:230.5px" width="16" height="16" viewBox="0 0 16 16"><path d="M.8 2.2 H14.6 V12.6 L12 15.4 H.8 Z" fill="#fbfbfb" stroke="#a8a8a8" stroke-width=".7"/><rect x="1" y="2.2" width="13.4" height="3" fill="#3aa43a"/><rect x="1" y="2.2" width="13.4" height="1" fill="#70c870"/><path d="M4 1 V3 M11.5 1 V3" stroke="#555" stroke-width=".7"/><path d="M2.3 8.5 H5 V6.6 H13.3 V11.5 H8.5 V13.5 H2.3 Z" fill="none" stroke="#d85050" stroke-width=".9"/><path d="M6 8.3 h.9 M8 8.3 h.9 M10 8.3 h.9 M12 8.3 h.6 M4 10.3 h.9 M6 10.3 h.9 M8 10.3 h.9 M10 10.3 h.9 M4 12.3 h.9 M6 12.3 h.9" stroke="#333" stroke-width=".9"/></svg>
<svg class="a" style="left:828px;top:250.5px" width="16" height="16" viewBox="0 0 16 16"><path d="M.8 2.2 H14.6 V12.6 L12 15.4 H.8 Z" fill="#fbfbfb" stroke="#a8a8a8" stroke-width=".7"/><rect x="1" y="2.2" width="13.4" height="3" fill="#3aa43a"/><rect x="1" y="2.2" width="13.4" height="1" fill="#70c870"/><path d="M4 1 V3 M11.5 1 V3" stroke="#555" stroke-width=".7"/><path d="M2.3 8.5 H5 V6.6 H13.3 V11.5 H8.5 V13.5 H2.3 Z" fill="none" stroke="#d85050" stroke-width=".9"/><path d="M6 8.3 h.9 M8 8.3 h.9 M10 8.3 h.9 M12 8.3 h.6 M4 10.3 h.9 M6 10.3 h.9 M8 10.3 h.9 M10 10.3 h.9 M4 12.3 h.9 M6 12.3 h.9" stroke="#333" stroke-width=".9"/></svg>
<svg class="a" style="left:828px;top:300px" width="16" height="16" viewBox="0 0 16 16"><path d="M.5 2.5 H6 L7.5 4 H15.5 V14.5 H.5 Z" fill="#5f92cf" stroke="#3a6aa8" stroke-width=".8"/><rect x="1" y="5.5" width="14" height="8.5" fill="#8ab6e6"/><path d="M4 13 L12.5 4 L14 5.5 L5.5 14 Z" fill="#e8c030" stroke="#222" stroke-width=".6"/><path d="M12.5 4 L14 5.5 L15 3.5 Z" fill="#d02020"/></svg>
<svg class="a" style="left:828px;top:320px" width="16" height="16" viewBox="0 0 16 16"><path d="M.5 2.5 H6 L7.5 4 H15.5 V14.5 H.5 Z" fill="#5f92cf" stroke="#3a6aa8" stroke-width=".8"/><rect x="1" y="5.5" width="14" height="8.5" fill="#8ab6e6"/><rect x="2" y="4" width="12" height="4" fill="#802060"/><rect x="3" y="5" width="3" height="2" fill="#f0c040"/></svg>
<svg class="a" style="left:828px;top:340px" width="16" height="16" viewBox="0 0 16 16"><path d="M.5 2.5 H6 L7.5 4 H15.5 V14.5 H.5 Z" fill="#5f92cf" stroke="#3a6aa8" stroke-width=".8"/><rect x="1" y="5.5" width="14" height="8.5" fill="#8ab6e6"/><path d="M11 4 V12" stroke="#2a8a2a" stroke-width="1.2"/><ellipse cx="9" cy="12.5" rx="2.6" ry="2" fill="#30b030"/></svg>
<svg class="a" style="left:828px;top:360px" width="16" height="16" viewBox="0 0 16 16"><path d="M.5 2.5 H6 L7.5 4 H15.5 V14.5 H.5 Z" fill="#5f92cf" stroke="#3a6aa8" stroke-width=".8"/><rect x="1" y="5.5" width="14" height="8.5" fill="#8ab6e6"/><rect x="3" y="6" width="12" height="9" fill="#222"/><path d="M4 8 h2 M7 8 h2 M10 8 h2 M4 12 h2 M7 12 h2 M10 12 h2" stroke="#fff" stroke-width="1.5"/></svg>
<svg class="a" style="left:828px;top:410px" width="16" height="16" viewBox="0 0 16 16"><rect x="1.5" y=".5" width="13" height="15" rx="1" fill="#e4e4e4" stroke="#333" stroke-width="1"/><rect x="3" y="2" width="10" height="5" fill="#cfcfcf"/><rect x="10.5" y="13" width="3" height="1.2" fill="#2a2"/><rect x="3.5" y="8.5" width="5" height="4.5" fill="#111"/><rect x="5" y="10" width="2" height="1.5" fill="#fff"/></svg>
<svg class="a" style="left:828px;top:430px" width="16" height="16" viewBox="0 0 16 16"><rect x="1.5" y=".5" width="13" height="15" rx="1" fill="#e4e4e4" stroke="#333" stroke-width="1"/><rect x="3" y="2" width="10" height="5" fill="#cfcfcf"/><rect x="10.5" y="13" width="3" height="1.2" fill="#2a2"/><rect x="3.5" y="8.5" width="5" height="4.5" fill="#111"/><rect x="5" y="10" width="2" height="1.5" fill="#fff"/></svg>
<svg class="a" style="left:828px;top:450px" width="16" height="16" viewBox="0 0 16 16"><rect x="1.5" y=".5" width="13" height="15" rx="1" fill="#e4e4e4" stroke="#333" stroke-width="1"/><rect x="3" y="2" width="10" height="5" fill="#cfcfcf"/><rect x="10.5" y="13" width="3" height="1.2" fill="#2a2"/><rect x="3.5" y="8" width="5" height="5.5" fill="#111"/><path d="M4.5 13 L7.5 8.5" stroke="#fff" stroke-width="1"/></svg>
<svg class="a" style="left:828px;top:470px" width="16" height="16" viewBox="0 0 16 16"><rect x="1.5" y=".5" width="13" height="15" rx="1" fill="#e4e4e4" stroke="#333" stroke-width="1"/><rect x="3" y="2" width="10" height="5" fill="#cfcfcf"/><rect x="10.5" y="13" width="3" height="1.2" fill="#2a2"/><rect x="3.5" y="8" width="5" height="5.5" fill="#111"/><path d="M4.5 13 L7.5 8.5" stroke="#fff" stroke-width="1"/></svg>
<svg class="a" style="left:828px;top:490px" width="16" height="16" viewBox="0 0 16 16"><rect x="1.5" y=".5" width="13" height="15" rx="1" fill="#e4e4e4" stroke="#333" stroke-width="1"/><rect x="3" y="2" width="10" height="5" fill="#cfcfcf"/><rect x="10.5" y="13" width="3" height="1.2" fill="#2a2"/><rect x="3.5" y="8" width="5" height="5.5" fill="#111"/><path d="M4.5 13 L7.5 8.5" stroke="#fff" stroke-width="1"/></svg>
<div class="a" style="left:1006px;top:316px;width:1px;height:26px;background:repeating-linear-gradient(180deg,#aaa6a3 0,#aaa6a3 1px,transparent 1px,transparent 4px)"></div>
<div class="a" style="left:1634px;top:290px;width:1px;height:12px;background:repeating-linear-gradient(180deg,#8a8683 0,#8a8683 1px,transparent 1px,transparent 3px)"></div>
<div class="a" style="left:1010.2px;top:119.3px;width:624px;height:424.5px;background:#fff;box-shadow:inset 1px 1px 0 #aaa5a2, inset -1px -1px 0 #e0dcda"></div>
<div class="a" style="left:1011px;top:141px;width:622px;height:1px;background:#dcd9d7"></div>
<div class="a" style="left:1469px;top:121px;width:1px;height:20px;background:#e2dfdd"></div><div class="a" style="left:1525px;top:121px;width:1px;height:20px;background:#e2dfdd"></div>
<div class="t" style="left:1015.40px;top:125.05px;font-size:12.5px;line-height:12.5px;letter-spacing:-0.086px;">Name</div>
<svg class="a" style="left:1451px;top:125px" width="12" height="8"><path d="M1.5 1.5 L6 6 L10.5 1.5" fill="none" stroke="#8a8683" stroke-width="1.6"/></svg>
<div class="t" style="left:1474.60px;top:125.40px;font-size:11.8px;line-height:11.8px;letter-spacing:-0.388px;">Größe</div>
<div class="t" style="left:1530.40px;top:125.05px;font-size:12.5px;line-height:12.5px;letter-spacing:-0.186px;">Datum</div>
<div class="a" style="left:1011px;top:162px;width:622px;height:19.7px;background:#efeeed"></div>
<div class="a" style="left:1050.3px;top:146.2px;width:119.3px;height:10.8px;border:1px solid #b9b5b2;border-radius:1px;background:#fff"></div>
<svg class="a" style="left:1033px;top:145px" width="16" height="15" viewBox="0 0 16 15"><rect x="1" y=".5" width="13.5" height="14" rx="1" fill="#9a9a9a"/><rect x="1.5" y="1" width="12.5" height="11" fill="#c8c8c8"/><path d="M7.5 4 L10 6.5 L7.5 9 L5 6.5 Z" fill="none" stroke="#3060a0" stroke-width="1"/></svg>
<svg class="a" style="left:1032px;top:163px" width="17" height="17" viewBox="0 0 17 17"><rect x="1" y="6" width="8" height="8" fill="#fff" stroke="#999" stroke-width=".8"/><text x="3" y="13" font-size="8" font-family="Liberation Sans" fill="#e06010">?</text><rect x="8" y="1" width="8" height="8" fill="#fff" stroke="#999" stroke-width=".8"/><path d="M12 2.5 L14 4.7 L12 6.9 L10 4.7 Z" fill="none" stroke="#3060a0" stroke-width=".9"/></svg>
<div class="t" style="left:1053.40px;top:145.55px;font-size:12.5px;line-height:12.5px;letter-spacing:-0.040px;">sidu-manual.desktop</div>
<div class="t" style="left:1053.40px;top:165.85px;font-size:12.5px;line-height:12.5px;letter-spacing:-0.050px;">siduction-irc.desktop</div>
<div class="t" style="left:1489.50px;top:145.55px;font-size:12.5px;line-height:12.5px;color:#5e5957;letter-spacing:-0.554px;">169 B</div>
<div class="t" style="left:1532.70px;top:145.55px;font-size:12.5px;line-height:12.5px;color:#5e5957;letter-spacing:-0.189px;">08.01.2015 14:27</div>
<div class="t" style="left:1489.80px;top:165.85px;font-size:12.5px;line-height:12.5px;color:#5e5957;letter-spacing:-0.614px;">171 B</div>
<div class="t" style="left:1532.70px;top:165.85px;font-size:12.5px;line-height:12.5px;color:#5e5957;letter-spacing:-0.189px;">08.01.2015 14:27</div>
<div class="t" style="left:1010.40px;top:547.05px;font-size:12.5px;line-height:12.5px;letter-spacing:-0.223px;">2 Dateien (340 B)</div>
<div class="a" style="left:1540px;top:551px;width:94px;height:3px;border-radius:2px;background:#c9c6c4;box-shadow:inset 0 1px 0 #b3afac"></div>
<div class="a" style="left:1532.5px;top:544.5px;width:15px;height:15px;border-radius:50%;background:radial-gradient(circle at 50% 35%,#fafafa,#d8d4d2 75%);box-shadow:0 1px 2px rgba(0,0,0,.4)"></div>
<div class="win" style="left:1091px;top:652px;width:840px;height:517.5px;border-radius:4px 0 0 4px"></div>
<div class="tbsep" style="left:1099px;top:671.5px;width:821px"></div>
<svg class="a" style="left:1095px;top:654px" width="18" height="15" viewBox="0 0 18 15">
<path d="M9 1 C14 1 17 3.5 17 6.8 C17 10 14 12.5 9 12.5 C7.5 12.5 6 12.2 5 11.8 L1.5 14 L2.5 10.8 C1.5 9.8 1 8.4 1 6.8 C1 3.5 4 1 9 1 Z" fill="#111"/>
<path d="M4 5 H8 L13 3.5 V10 L8 8.5 H4 Z" fill="#fff"/><ellipse cx="9" cy="3.5" rx="6" ry="2" fill="rgba(255,255,255,.3)"/></svg>
<div class="cb" style="left:1116.25px;top:655.90px"></div><div class="a" style="left:1121.35px;top:662.00px;width:1.8px;height:1.8px;border-radius:50%;background:#1a1a1a"></div>
<div class="t" style="left:1433.60px;top:656.90px;font-size:11.2px;line-height:11.2px;color:#9a9693;letter-spacing:0.707px;">#siduction – Konversation</div>
<div class="cb" style="left:1864.50px;top:655.90px"></div><svg class="a" style="left:1864.00px;top:655.40px" width="13" height="13"><path d="M3.6 5.2 L6.5 8.1 L9.4 5.2" fill="none" stroke="#8d8986" stroke-width="1.05"/></svg>
<div class="cb" style="left:1883.50px;top:655.90px"></div><svg class="a" style="left:1883.00px;top:655.40px" width="13" height="13"><path d="M3.6 7.8 L6.5 4.9 L9.4 7.8" fill="none" stroke="#8d8986" stroke-width="1.05"/></svg>
<div class="cb" style="left:1902.30px;top:655.90px"></div><svg class="a" style="left:1901.80px;top:655.40px" width="13" height="13"><path d="M3.9 3.9 L9.1 9.1 M9.1 3.9 L3.9 9.1" fill="none" stroke="#8d8986" stroke-width="1.05"/></svg>
<div class="t" style="left:1105.40px;top:677.35px;font-size:12.5px;line-height:12.5px;letter-spacing:-0.087px;">Datei</div>
<div class="a" style="left:1106.4px;top:689px;width:8px;height:1px;background:#222"></div>
<div class="t" style="left:1152.90px;top:677.35px;font-size:12.5px;line-height:12.5px;letter-spacing:-0.087px;">Bearbeiten</div>
<div class="a" style="left:1153.9px;top:689px;width:8px;height:1px;background:#222"></div>
<div class="t" style="left:1231.00px;top:677.35px;font-size:12.5px;line-height:12.5px;letter-spacing:-0.470px;">Einfügen</div>
<div class="a" style="left:1232.0px;top:689px;width:7px;height:1px;background:#222"></div>
<div class="t" style="left:1295.40px;top:677.35px;font-size:12.5px;line-height:12.5px;letter-spacing:-0.155px;">Lesezeichen</div>
<div class="a" style="left:1296.4px;top:689px;width:7px;height:1px;background:#222"></div>
<div class="t" style="left:1382.40px;top:677.35px;font-size:12.5px;line-height:12.5px;letter-spacing:-0.205px;">Einstellungen</div>
<div class="a" style="left:1383.4px;top:689px;width:7px;height:1px;background:#222"></div>
<div class="t" style="left:1473.40px;top:677.35px;font-size:12.5px;line-height:12.5px;letter-spacing:-0.256px;">Fenster</div>
<div class="a" style="left:1474.4px;top:689px;width:7px;height:1px;background:#222"></div>
<div class="t" style="left:1533.00px;top:677.35px;font-size:12.5px;line-height:12.5px;letter-spacing:-0.223px;">Hilfe</div>
<div class="a" style="left:1534.0px;top:689px;width:8px;height:1px;background:#222"></div>
<div class="a" style="left:1093.3px;top:693px;width:144.7px;height:452px;background:#fff;box-shadow:inset 1px 1px 0 #aaa5a2"></div>
<div class="t" style="left:1096.60px;top:697.85px;font-size:11.5px;line-height:11.5px;letter-spacing:-0.728px;">OFTC</div>
<div class="a" style="left:1114.1px;top:711.9px;width:122.5px;height:18.1px;border-radius:4px 0 0 4px;background:#97c8ee"></div>
<div class="a" style="left:1104px;top:713px;width:1px;height:26px;background:repeating-linear-gradient(180deg,#333 0,#333 1px,transparent 1px,transparent 2px)"></div>
<div class="a" style="left:1104px;top:720.5px;width:9px;height:1px;background:repeating-linear-gradient(90deg,#333 0,#333 1px,transparent 1px,transparent 2px)"></div>
<div class="a" style="left:1104px;top:738.5px;width:9px;height:1px;background:repeating-linear-gradient(90deg,#333 0,#333 1px,transparent 1px,transparent 2px)"></div>
<div class="t" style="left:1115.75px;top:715.20px;font-size:12.5px;line-height:12.5px;letter-spacing:0.145px;">#siduction</div>
<div class="t" style="left:1115.75px;top:733.20px;font-size:12.5px;line-height:12.5px;color:#f01010;letter-spacing:0.069px;">#siduction-de</div>
<svg class="a" style="left:1245px;top:694px" width="24" height="25" viewBox="0 0 24 25">
<path d="M1.5 4.5 H17 L22.5 10 V23.5 H1.5 Z" fill="#f2f2f2" stroke="#b5b5b5"/>
<path d="M3.5 21 L19 4 L21.5 6.5 L6 23 L3 23.5 Z" fill="#e8c020" stroke="#222" stroke-width=".8"/>
<path d="M19 4 L21.5 6.5 L23 4.5 L21 2.5 Z" fill="#d02020"/></svg>
<div class="t" style="left:1270.00px;top:694.05px;font-size:12.5px;line-height:12.5px;letter-spacing:-0.158px;">:: siduction :: The new community-based OS :: channel language: english - free speech, keep it civil! Deutscher Support</div>
<div class="t" style="left:1270px;top:707px;font-size:11.5px;line-height:13px">in</div>
<div class="t" style="left:1283.50px;top:708.25px;font-size:12.5px;line-height:12.5px;color:#0b57c0;text-decoration:underline;letter-spacing:0.072px;">#siduction-de</div>
<div class="a" style="left:1573px;top:722px;width:37px;height:1px;background:repeating-linear-gradient(90deg,#aaa6a3 0,#aaa6a3 1px,transparent 1px,transparent 4px)"></div>
<div class="a" style="left:1244.3px;top:727.6px;width:530px;height:389.5px;background:#fff;box-shadow:inset 1px 1px 0 #aaa5a2"></div>
<div class="a" style="left:1758.3px;top:729px;width:16px;height:388px;background:#d3d0ce"></div>
<svg class="a" style="left:1760px;top:731px" width="12" height="10"><path d="M2 7 L6 3 L10 7" fill="none" stroke="#8a8683" stroke-width="1.6"/></svg>
<svg class="a" style="left:1760px;top:1102px" width="12" height="10"><path d="M2 3 L6 7 L10 3" fill="none" stroke="#8a8683" stroke-width="1.6"/></svg>
<div class="a" style="left:1761.5px;top:851px;width:9px;height:244px;border-radius:4px;background:#a9a6a4"></div>
<div class="t" style="left:1249.50px;top:729.30px;font-size:12.8px;line-height:12.8px;color:#141414;letter-spacing:-0.297px;"><span style="color:#a19c9a">community-based OS :: channel language: english - free speech, keep it civil! Deutscher</span></div>
<div class="t" style="left:1249.50px;top:743.30px;font-size:12.8px;line-height:12.8px;color:#141414;letter-spacing:-0.185px;"><span style="color:#a19c9a">Support in #siduction-de “.</span></div>
<div class="t" style="left:1249.50px;top:757.30px;font-size:12.8px;line-height:12.8px;color:#141414;letter-spacing:-0.210px;"><span style="color:#a19c9a">[Freitag, 9. Januar 2015] [10:12:20] |Thema| Das Thema wurde am 02.02.2014 14:58 von</span></div>
<div class="t" style="left:1249.50px;top:771.30px;font-size:12.8px;line-height:12.8px;color:#141414;letter-spacing:-0.448px;"><span style="color:#a19c9a">ChanServ!services@services.oftc.net gesetzt.</span></div>
<div class="t" style="left:1249.50px;top:785.30px;font-size:12.8px;line-height:12.8px;color:#141414;letter-spacing:-0.198px;"><span style="color:#a19c9a">[Freitag, 9. Januar 2015] [10:12:26] |Modus| Kanalmodi: Keine Nachrichten von außen,</span></div>
<div class="t" style="left:1249.50px;top:799.30px;font-size:12.8px;line-height:12.8px;color:#141414;letter-spacing:-0.261px;"><span style="color:#a19c9a">Themenschutz</span></div>
<div class="t" style="left:1249.50px;top:813.30px;font-size:12.8px;line-height:12.8px;color:#141414;letter-spacing:-0.175px;"><span style="color:#a19c9a">[Freitag, 9. Januar 2015] [10:12:26] |Erstellt| Kanal wurde erstellt am: 14.08.2011 20:36.</span></div>
<div class="t" style="left:1249.50px;top:827.30px;font-size:12.8px;line-height:12.8px;color:#141414;letter-spacing:-0.151px;"><span style="color:#a19c9a">[Freitag, 9. Januar 2015] [10:12:26] |Spitzname| Sie sind jetzt als absolut bekannt.</span></div>
<div class="t" style="left:1249.50px;top:841.30px;font-size:12.8px;line-height:12.8px;color:#141414;letter-spacing:-0.165px;"><span style="color:#a19c9a">[Freitag, 9. Januar 2015] [10:16:40] |Betreten| superfast1</span></div>
<div class="t" style="left:1249.50px;top:855.30px;font-size:12.8px;line-height:12.8px;color:#141414;letter-spacing:-0.250px;"><span style="color:#a19c9a">(~superfast@h081217057177.dyn.cm.kabsi.at) hat diesen Kanal betreten.</span></div>
<div class="t" style="left:1249.50px;top:869.30px;font-size:12.8px;line-height:12.8px;color:#141414;letter-spacing:-0.269px;"><span style="color:#6f8d7c">[10:21:24]</span><span style="color:#9c0d9c"> --&gt; Sie (~siducer@dslb-084-060-100-089.084.060.pools.vodafone-ip.de) haben</span></div>
<div class="t" style="left:1249.50px;top:883.30px;font-size:12.8px;line-height:12.8px;color:#141414;letter-spacing:-0.156px;"><span style="color:#9c0d9c">den Kanal #siduction betreten.</span></div>
<div class="t" style="left:1249.50px;top:897.30px;font-size:12.8px;line-height:12.8px;color:#141414;letter-spacing:-0.178px;"><span style="color:#6f8d7c">[10:21:24]</span><span style="color:#9c0d9c"> *** Das Kanalthema lautet: „:: siduction :: The new community-based OS ::</span></div>
<div class="t" style="left:1249.50px;top:911.30px;font-size:12.8px;line-height:12.8px;color:#141414;letter-spacing:-0.257px;"><span style="color:#9c0d9c">channel language: english - free speech, keep it civil! Deutscher Support in <u style="color:#0b2bd0;border-bottom-color:#0b2bd0">#siduction-de</u> “.</span></div>
<div class="t" style="left:1249.50px;top:925.30px;font-size:12.8px;line-height:12.8px;color:#141414;letter-spacing:-0.145px;"><span style="color:#6f8d7c">[10:21:24]</span><span style="color:#9c0d9c"> *** Das Thema wurde am 02.02.2014 14:58 von</span></div>
<div class="t" style="left:1249.50px;top:939.30px;font-size:12.8px;line-height:12.8px;color:#141414;letter-spacing:-0.448px;"><span style="color:#9c0d9c">ChanServ!services@services.oftc.net gesetzt.</span></div>
<div class="t" style="left:1249.50px;top:953.30px;font-size:12.8px;line-height:12.8px;color:#141414;letter-spacing:-0.153px;"><span style="color:#6f8d7c">[10:21:31]</span><span style="color:#9c0d9c"> *** Kanalmodi: Keine Nachrichten von außen, Themenschutz</span></div>
<div class="t" style="left:1249.50px;top:967.30px;font-size:12.8px;line-height:12.8px;color:#141414;letter-spacing:-0.080px;"><span style="color:#6f8d7c">[10:21:31]</span><span style="color:#9c0d9c"> *** Kanal wurde erstellt am: 14.08.2011 20:36.</span></div>
<div class="t" style="left:1249.50px;top:981.30px;font-size:12.8px;line-height:12.8px;color:#141414;letter-spacing:-0.298px;"><span style="color:#6f8d7c">[10:21:31]</span> &lt;<b>absolut</b>&gt; moinin'</div>
<div class="t" style="left:1249.50px;top:995.30px;font-size:12.8px;line-height:12.8px;color:#141414;letter-spacing:-0.317px;"><span style="color:#6f8d7c">[10:21:37]</span> &lt;<b>absolut</b>&gt; mornin'</div>
<div class="t" style="left:1249.50px;top:1009.30px;font-size:12.8px;line-height:12.8px;color:#141414;letter-spacing:-0.315px;"><span style="color:#6f8d7c">[10:21:58]</span> &lt;<b>absolut</b>&gt; devil_ , musca... with regard to the issue i have mentioned yesterday</div>
<div class="t" style="left:1249.50px;top:1023.30px;font-size:12.8px;line-height:12.8px;color:#141414;letter-spacing:-0.333px;"><span style="color:#6f8d7c">[10:22:19]</span> &lt;<b>absolut</b>&gt; about kde graphical errors...</div>
<div class="t" style="left:1249.50px;top:1037.30px;font-size:12.8px;line-height:12.8px;color:#141414;letter-spacing:-0.247px;"><span style="color:#6f8d7c">[10:23:47]</span> &lt;<b>absolut</b>&gt; i have just found out that in systemsettings -&gt; application appearance -</div>
<div class="t" style="left:1249.50px;top:1051.30px;font-size:12.8px;line-height:12.8px;color:#141414;letter-spacing:-0.293px;">&gt; style the current preset to oxygen is corrupt.... chosing again "oxygen" and applying the</div>
<div class="t" style="left:1249.50px;top:1065.30px;font-size:12.8px;line-height:12.8px;color:#141414;letter-spacing:-0.211px;">changes leads to the actual desired appearance</div>
<div class="t" style="left:1249.50px;top:1079.30px;font-size:12.8px;line-height:12.8px;color:#141414;letter-spacing:-0.331px;"><span style="color:#6f8d7c">[10:24:18]</span> &lt;<b>absolut</b>&gt; this fix does NOT survive a logout / reboot</div>
<div class="t" style="left:1249.50px;top:1093.30px;font-size:12.8px;line-height:12.8px;color:#141414;letter-spacing:-0.259px;"><span style="color:#6f8d7c">[10:24:25]</span> &lt;<b>absolut</b>&gt; and i would like to know how to fix that</div>
<div class="a" style="left:1248px;top:1108px;width:507px;height:2px;background:#9c0d9c"></div>
<div class="a" style="left:1780.8px;top:727.3px;width:140px;height:389px;background:#fff;box-shadow:inset 1px 1px 0 #aaa5a2"></div>
<div class="a" style="left:1903px;top:729px;width:17px;height:388px;background:#d3d0ce"></div>
<svg class="a" style="left:1905px;top:731px" width="12" height="10"><path d="M2 7 L6 3 L10 7" fill="none" stroke="#8a8683" stroke-width="1.6"/></svg>
<svg class="a" style="left:1905px;top:1102px" width="12" height="10"><path d="M2 3 L6 7 L10 3" fill="none" stroke="#8a8683" stroke-width="1.6"/></svg>
<div class="a" style="left:1906px;top:747px;width:10px;height:170px;border-radius:5px;background:#a9a6a4"></div>
<div class="a" style="left:1781px;top:728px;width:122px;height:387px;overflow:hidden">
<div class="t" style="left:26.40px;top:2.95px;font-size:12.5px;line-height:12.5px;color:#a9a5a3;letter-spacing:-0.207px;">a1-away</div>
<svg class="a" style="left:4px;top:0.5px" width="16" height="17" viewBox="0 0 16 17"><ellipse cx="8" cy="14.5" rx="7" ry="3" fill="#eeeeee" stroke="#cfcfcf" stroke-width=".6"/><ellipse cx="8" cy="6" rx="3.3" ry="4.2" fill="#f0c8a0" stroke="#c09070" stroke-width=".5"/><path d="M4.7 5 Q8 0 11.3 5 Q8 3 4.7 5 Z" fill="#a07850"/><circle cx="11.5" cy="12" r="3.4" fill="#fff" stroke="#888" stroke-width=".8"/><path d="M11.5 10 V12 H13" stroke="#666" stroke-width=".7" fill="none"/></svg>
<div class="t" style="left:26.40px;top:20.95px;font-size:12.5px;line-height:12.5px;color:#141414;letter-spacing:0.027px;">absolut</div>
<svg class="a" style="left:4px;top:18.5px" width="16" height="17" viewBox="0 0 16 17"><ellipse cx="8" cy="14.5" rx="7" ry="3" fill="#eeeeee" stroke="#cfcfcf" stroke-width=".6"/><ellipse cx="8" cy="6" rx="3.3" ry="4.2" fill="#f0c8a0" stroke="#c09070" stroke-width=".5"/><path d="M4.7 5 Q8 0 11.3 5 Q8 3 4.7 5 Z" fill="#a07850"/></svg>
<div class="t" style="left:26.40px;top:38.95px;font-size:12.5px;line-height:12.5px;color:#141414;letter-spacing:-0.669px;">AbyssOne_</div>
<svg class="a" style="left:4px;top:36.5px" width="16" height="17" viewBox="0 0 16 17"><ellipse cx="8" cy="14.5" rx="7" ry="3" fill="#eeeeee" stroke="#cfcfcf" stroke-width=".6"/><ellipse cx="8" cy="6" rx="3.3" ry="4.2" fill="#f0c8a0" stroke="#c09070" stroke-width=".5"/><path d="M4.7 5 Q8 0 11.3 5 Q8 3 4.7 5 Z" fill="#a07850"/></svg>
<div class="t" style="left:26.40px;top:56.95px;font-size:12.5px;line-height:12.5px;color:#141414;letter-spacing:-0.274px;">agaida</div>
<svg class="a" style="left:4px;top:54.5px" width="16" height="17" viewBox="0 0 16 17"><ellipse cx="8" cy="14.5" rx="7" ry="3" fill="#eeeeee" stroke="#cfcfcf" stroke-width=".6"/><ellipse cx="8" cy="6" rx="3.3" ry="4.2" fill="#f0c8a0" stroke="#c09070" stroke-width=".5"/><path d="M4.7 5 Q8 0 11.3 5 Q8 3 4.7 5 Z" fill="#a07850"/></svg>
<div class="t" style="left:26.40px;top:74.95px;font-size:12.5px;line-height:12.5px;color:#141414;letter-spacing:-0.151px;">arno911_</div>
<svg class="a" style="left:4px;top:72.5px" width="16" height="17" viewBox="0 0 16 17"><ellipse cx="8" cy="14.5" rx="7" ry="3" fill="#eeeeee" stroke="#cfcfcf" stroke-width=".6"/><ellipse cx="8" cy="6" rx="3.3" ry="4.2" fill="#f0c8a0" stroke="#c09070" stroke-width=".5"/><path d="M4.7 5 Q8 0 11.3 5 Q8 3 4.7 5 Z" fill="#a07850"/></svg>
<div class="t" style="left:26.40px;top:92.95px;font-size:12.5px;line-height:12.5px;color:#141414;letter-spacing:-0.576px;">CoreDuo</div>
<svg class="a" style="left:4px;top:90.5px" width="16" height="17" viewBox="0 0 16 17"><ellipse cx="8" cy="14.5" rx="7" ry="3" fill="#eeeeee" stroke="#cfcfcf" stroke-width=".6"/><ellipse cx="8" cy="6" rx="3.3" ry="4.2" fill="#f0c8a0" stroke="#c09070" stroke-width=".5"/><path d="M4.7 5 Q8 0 11.3 5 Q8 3 4.7 5 Z" fill="#a07850"/></svg>
<div class="t" style="left:26.40px;top:110.95px;font-size:12.5px;line-height:12.5px;color:#141414;letter-spacing:-0.174px;">coruja</div>
<svg class="a" style="left:4px;top:108.5px" width="16" height="17" viewBox="0 0 16 17"><ellipse cx="8" cy="14.5" rx="7" ry="3" fill="#eeeeee" stroke="#cfcfcf" stroke-width=".6"/><ellipse cx="8" cy="6" rx="3.3" ry="4.2" fill="#f0c8a0" stroke="#c09070" stroke-width=".5"/><path d="M4.7 5 Q8 0 11.3 5 Q8 3 4.7 5 Z" fill="#a07850"/></svg>
<div class="t" style="left:26.40px;top:128.95px;font-size:12.5px;line-height:12.5px;color:#141414;letter-spacing:-0.266px;">cryptosteve</div>
<svg class="a" style="left:4px;top:126.5px" width="16" height="17" viewBox="0 0 16 17"><ellipse cx="8" cy="14.5" rx="7" ry="3" fill="#eeeeee" stroke="#cfcfcf" stroke-width=".6"/><ellipse cx="8" cy="6" rx="3.3" ry="4.2" fill="#f0c8a0" stroke="#c09070" stroke-width=".5"/><path d="M4.7 5 Q8 0 11.3 5 Q8 3 4.7 5 Z" fill="#a07850"/></svg>
<div class="t" style="left:26.40px;top:146.95px;font-size:12.5px;line-height:12.5px;color:#141414;letter-spacing:0.007px;">damentz</div>
<svg class="a" style="left:4px;top:144.5px" width="16" height="17" viewBox="0 0 16 17"><ellipse cx="8" cy="14.5" rx="7" ry="3" fill="#eeeeee" stroke="#cfcfcf" stroke-width=".6"/><ellipse cx="8" cy="6" rx="3.3" ry="4.2" fill="#f0c8a0" stroke="#c09070" stroke-width=".5"/><path d="M4.7 5 Q8 0 11.3 5 Q8 3 4.7 5 Z" fill="#a07850"/></svg>
<div class="t" style="left:26.40px;top:164.95px;font-size:12.5px;line-height:12.5px;color:#141414;letter-spacing:-0.268px;">der_bud</div>
<svg class="a" style="left:4px;top:162.5px" width="16" height="17" viewBox="0 0 16 17"><ellipse cx="8" cy="14.5" rx="7" ry="3" fill="#eeeeee" stroke="#cfcfcf" stroke-width=".6"/><ellipse cx="8" cy="6" rx="3.3" ry="4.2" fill="#f0c8a0" stroke="#c09070" stroke-width=".5"/><path d="M4.7 5 Q8 0 11.3 5 Q8 3 4.7 5 Z" fill="#a07850"/></svg>
<div class="t" style="left:26.40px;top:182.95px;font-size:12.5px;line-height:12.5px;color:#141414;letter-spacing:-0.279px;">devil_</div>
<svg class="a" style="left:4px;top:180.5px" width="16" height="17" viewBox="0 0 16 17"><ellipse cx="8" cy="14.5" rx="7" ry="3" fill="#eeeeee" stroke="#cfcfcf" stroke-width=".6"/><ellipse cx="8" cy="6" rx="3.3" ry="4.2" fill="#f0c8a0" stroke="#c09070" stroke-width=".5"/><path d="M4.7 5 Q8 0 11.3 5 Q8 3 4.7 5 Z" fill="#a07850"/></svg>
<div class="t" style="left:26.40px;top:200.95px;font-size:12.5px;line-height:12.5px;color:#141414;letter-spacing:0.006px;">freedomrun</div>
<svg class="a" style="left:4px;top:198.5px" width="16" height="17" viewBox="0 0 16 17"><ellipse cx="8" cy="14.5" rx="7" ry="3" fill="#eeeeee" stroke="#cfcfcf" stroke-width=".6"/><ellipse cx="8" cy="6" rx="3.3" ry="4.2" fill="#f0c8a0" stroke="#c09070" stroke-width=".5"/><path d="M4.7 5 Q8 0 11.3 5 Q8 3 4.7 5 Z" fill="#a07850"/></svg>
<div class="t" style="left:26.40px;top:218.95px;font-size:12.5px;line-height:12.5px;color:#141414;letter-spacing:-0.537px;">goineasy9__</div>
<svg class="a" style="left:4px;top:216.5px" width="16" height="17" viewBox="0 0 16 17"><ellipse cx="8" cy="14.5" rx="7" ry="3" fill="#eeeeee" stroke="#cfcfcf" stroke-width=".6"/><ellipse cx="8" cy="6" rx="3.3" ry="4.2" fill="#f0c8a0" stroke="#c09070" stroke-width=".5"/><path d="M4.7 5 Q8 0 11.3 5 Q8 3 4.7 5 Z" fill="#a07850"/></svg>
<div class="t" style="left:26.40px;top:236.95px;font-size:12.5px;line-height:12.5px;color:#141414;letter-spacing:-0.021px;">harrison</div>
<svg class="a" style="left:4px;top:234.5px" width="16" height="17" viewBox="0 0 16 17"><ellipse cx="8" cy="14.5" rx="7" ry="3" fill="#eeeeee" stroke="#cfcfcf" stroke-width=".6"/><ellipse cx="8" cy="6" rx="3.3" ry="4.2" fill="#f0c8a0" stroke="#c09070" stroke-width=".5"/><path d="M4.7 5 Q8 0 11.3 5 Q8 3 4.7 5 Z" fill="#a07850"/></svg>
<div class="t" style="left:26.40px;top:254.95px;font-size:12.5px;line-height:12.5px;color:#141414;letter-spacing:-0.539px;">hefee_</div>
<svg class="a" style="left:4px;top:252.5px" width="16" height="17" viewBox="0 0 16 17"><ellipse cx="8" cy="14.5" rx="7" ry="3" fill="#eeeeee" stroke="#cfcfcf" stroke-width=".6"/><ellipse cx="8" cy="6" rx="3.3" ry="4.2" fill="#f0c8a0" stroke="#c09070" stroke-width=".5"/><path d="M4.7 5 Q8 0 11.3 5 Q8 3 4.7 5 Z" fill="#a07850"/></svg>
<div class="t" style="left:26.40px;top:272.95px;font-size:12.5px;line-height:12.5px;color:#a9a5a3;letter-spacing:-0.369px;">hendrikL</div>
<svg class="a" style="left:4px;top:270.5px" width="16" height="17" viewBox="0 0 16 17"><ellipse cx="8" cy="14.5" rx="7" ry="3" fill="#eeeeee" stroke="#cfcfcf" stroke-width=".6"/><ellipse cx="8" cy="6" rx="3.3" ry="4.2" fill="#f0c8a0" stroke="#c09070" stroke-width=".5"/><path d="M4.7 5 Q8 0 11.3 5 Q8 3 4.7 5 Z" fill="#a07850"/><circle cx="11.5" cy="12" r="3.4" fill="#fff" stroke="#888" stroke-width=".8"/><path d="M11.5 10 V12 H13" stroke="#666" stroke-width=".7" fill="none"/></svg>
<div class="t" style="left:26.40px;top:290.95px;font-size:12.5px;line-height:12.5px;color:#141414;letter-spacing:-0.362px;">ilven_</div>
<svg class="a" style="left:4px;top:288.5px" width="16" height="17" viewBox="0 0 16 17"><ellipse cx="8" cy="14.5" rx="7" ry="3" fill="#eeeeee" stroke="#cfcfcf" stroke-width=".6"/><ellipse cx="8" cy="6" rx="3.3" ry="4.2" fill="#f0c8a0" stroke="#c09070" stroke-width=".5"/><path d="M4.7 5 Q8 0 11.3 5 Q8 3 4.7 5 Z" fill="#a07850"/></svg>
<div class="t" style="left:26.40px;top:308.95px;font-size:12.5px;line-height:12.5px;color:#141414;letter-spacing:0.289px;">ivan``</div>
<svg class="a" style="left:4px;top:306.5px" width="16" height="17" viewBox="0 0 16 17"><ellipse cx="8" cy="14.5" rx="7" ry="3" fill="#eeeeee" stroke="#cfcfcf" stroke-width=".6"/><ellipse cx="8" cy="6" rx="3.3" ry="4.2" fill="#f0c8a0" stroke="#c09070" stroke-width=".5"/><path d="M4.7 5 Q8 0 11.3 5 Q8 3 4.7 5 Z" fill="#a07850"/></svg>
<div class="t" style="left:26.40px;top:326.95px;font-size:12.5px;line-height:12.5px;color:#141414;letter-spacing:0.152px;">jihisan</div>
<svg class="a" style="left:4px;top:324.5px" width="16" height="17" viewBox="0 0 16 17"><ellipse cx="8" cy="14.5" rx="7" ry="3" fill="#eeeeee" stroke="#cfcfcf" stroke-width=".6"/><ellipse cx="8" cy="6" rx="3.3" ry="4.2" fill="#f0c8a0" stroke="#c09070" stroke-width=".5"/><path d="M4.7 5 Q8 0 11.3 5 Q8 3 4.7 5 Z" fill="#a07850"/></svg>
<div class="t" style="left:26.40px;top:344.95px;font-size:12.5px;line-height:12.5px;color:#141414;letter-spacing:-0.497px;">JohnML</div>
<svg class="a" style="left:4px;top:342.5px" width="16" height="17" viewBox="0 0 16 17"><ellipse cx="8" cy="14.5" rx="7" ry="3" fill="#eeeeee" stroke="#cfcfcf" stroke-width=".6"/><ellipse cx="8" cy="6" rx="3.3" ry="4.2" fill="#f0c8a0" stroke="#c09070" stroke-width=".5"/><path d="M4.7 5 Q8 0 11.3 5 Q8 3 4.7 5 Z" fill="#a07850"/></svg>
<div class="t" style="left:26.40px;top:362.95px;font-size:12.5px;line-height:12.5px;color:#141414;letter-spacing:-0.203px;">Kaimei</div>
<svg class="a" style="left:4px;top:360.5px" width="16" height="17" viewBox="0 0 16 17"><ellipse cx="8" cy="14.5" rx="7" ry="3" fill="#eeeeee" stroke="#cfcfcf" stroke-width=".6"/><ellipse cx="8" cy="6" rx="3.3" ry="4.2" fill="#f0c8a0" stroke="#c09070" stroke-width=".5"/><path d="M4.7 5 Q8 0 11.3 5 Q8 3 4.7 5 Z" fill="#a07850"/></svg>
<div class="t" style="left:26.40px;top:380.95px;font-size:12.5px;line-height:12.5px;color:#141414;letter-spacing:-0.190px;">log_bbl</div>
<svg class="a" style="left:4px;top:378.5px" width="16" height="17" viewBox="0 0 16 17"><ellipse cx="8" cy="14.5" rx="7" ry="3" fill="#eeeeee" stroke="#cfcfcf" stroke-width=".6"/><ellipse cx="8" cy="6" rx="3.3" ry="4.2" fill="#f0c8a0" stroke="#c09070" stroke-width=".5"/><path d="M4.7 5 Q8 0 11.3 5 Q8 3 4.7 5 Z" fill="#a07850"/></svg>
</div>
<div class="a" style="left:1244.6px;top:1123.8px;width:84.6px;height:19.6px;border-radius:3px;background:linear-gradient(90deg,#d9d6d4 0,#d9d6d4 75%,#eceae9 75%);box-shadow:0 0 0 1px rgba(160,156,153,.6),0 1px 1px rgba(0,0,0,.1)"></div>
<div class="t" style="left:1249.70px;top:1128.05px;font-size:12.5px;line-height:12.5px;letter-spacing:0.012px;">absolut</div>
<svg class="a" style="left:1312px;top:1128px" width="13" height="10"><path d="M2 3 L6.5 7.5 L11 3" fill="none" stroke="#777" stroke-width="1.5"/></svg>
<div class="a" style="left:1337.2px;top:1123.5px;width:600px;height:21.5px;background:#fff;box-shadow:inset 1px 1px 0 #aaa5a2"></div>
<div class="a" style="left:1091px;top:1160px;width:829px;height:9.5px;background:linear-gradient(180deg,rgba(150,145,142,0),rgba(150,145,142,.55))"></div>
<div class="t" style="left:1095.50px;top:1149.95px;font-size:12.5px;line-height:12.5px;letter-spacing:-0.277px;">Bereit.</div>
<div class="t" style="left:1610.80px;top:1149.65px;font-size:12.5px;line-height:12.5px;letter-spacing:-0.102px;">#siduction - 42 Benutzer (0 Ops)</div>
<div class="t" style="left:1794.20px;top:1149.65px;font-size:12.5px;line-height:12.5px;letter-spacing:-0.224px;">irc.oftc.net - Lag: 28 ms</div>
<div class="a" style="left:0;top:1170px;width:1920px;height:30px;background:linear-gradient(180deg,rgba(255,255,255,.35) 0,rgba(255,255,255,.12) 1px,rgba(0,0,0,.08) 2px,rgba(0,0,0,0) 4px),linear-gradient(90deg,#6f9ba1 0,#74a3aa 250px,#7cafb7 600px,#82b9c3 950px,#7db2ba 1300px,#84bec7 1550px,#80b6bf 1750px,#76a5ad 1920px)"></div>
<div class="a" style="left:600px;top:1170px;width:700px;height:30px;background:radial-gradient(ellipse 300px 30px at 50% 60%,rgba(140,215,230,.25),rgba(140,215,230,0))"></div>
<div class="a" style="left:1500px;top:1170px;width:300px;height:30px;background:radial-gradient(ellipse 120px 30px at 50% 60%,rgba(140,215,230,.5),rgba(140,215,230,0))"></div>
<svg class="a" style="left:4px;top:1175px" width="23" height="22" viewBox="0 0 23 22">
<defs><radialGradient id="gKo" cx=".35" cy=".35" r=".7"><stop offset="0" stop-color="#6a8ad8"/><stop offset="1" stop-color="#1a3a88"/></radialGradient></defs><g fill="url(#gKo)"><circle cx="11.5" cy="2.2" r="2.1"/><circle cx="6.8" cy="6.6" r="2.1"/><circle cx="16.2" cy="6.6" r="2.1"/><circle cx="2.3" cy="11" r="2.1"/><circle cx="11.5" cy="11" r="2.1"/><circle cx="20.7" cy="11" r="2.1"/><circle cx="6.8" cy="15.4" r="2.1"/><circle cx="16.2" cy="15.4" r="2.1"/><circle cx="11.5" cy="19.8" r="2.1"/></g></svg>
<svg class="a" style="left:40px;top:1178px" width="20" height="16" viewBox="0 0 20 16">
<path d="M1 2 L19 0 V13 L1 14 Z" fill="#2a60a8"/><path d="M10 13.5 L19 4 V13 Z" fill="#1a4078"/><rect x="1" y="13" width="18" height="2.5" fill="#111"/><circle cx="3.5" cy="5" r="1" fill="#ddd"/><circle cx="3.5" cy="8" r="1" fill="#e0d040"/></svg>
<svg class="a" style="left:73px;top:1175px" width="18" height="22" viewBox="0 0 18 22">
<path d="M2 1.5 H16 L17 4 V21 H1 V4 Z" fill="#f6f6f6" stroke="#888" stroke-width=".8"/><rect x="2" y="5" width="14" height="7" fill="#3a8ce0"/><rect x="2" y="13" width="14" height="7" fill="#3a8ce0"/><rect x="6" y="5.5" width="6" height="2" fill="#fff"/><rect x="6" y="13.5" width="6" height="2" fill="#fff"/></svg>
<svg class="a" style="left:104px;top:1174px" width="22" height="22" viewBox="0 0 22 22">
<defs><radialGradient id="gGl" cx=".4" cy=".4" r=".6"><stop offset="0" stop-color="#a0a8ff"/><stop offset="1" stop-color="#2a2aa8"/></radialGradient></defs>
<circle cx="10" cy="12" r="9" fill="url(#gGl)"/><path d="M3 14 Q10 18 19 8" stroke="#fff" stroke-width="1.3" fill="none"/><path d="M13 5 L16 1 L20 3 L19 7 L15 8 Z" fill="#f0f0f0" stroke="#999" stroke-width=".5"/></svg>
<svg class="a" style="left:135.5px;top:1175.5px" width="21" height="21" viewBox="0 0 21 21">
<rect x=".5" y=".5" width="20" height="20" fill="#f8f8f8" stroke="#ccc"/><rect x="2" y="2" width="17" height="17" fill="#48a830"/><path d="M2 11 Q10 3 19 6 V19 H2 Z" fill="#78c850"/><path d="M13 2 Q17 10 13 19" stroke="#fff" stroke-width="1.5" fill="none"/><circle cx="9" cy="14" r="2.5" fill="#fff"/></svg>
<div class="a" style="left:165px;top:1176.7px;width:31.3px;height:18.6px;border-radius:3px;background:#5e7273;box-shadow:0 0 0 1px rgba(60,75,76,.8)"></div>
<div class="a" style="left:166.5px;top:1178.2px;width:12px;height:15.6px;background:#2e3a3b"></div>
<div class="a" style="left:180px;top:1178.2px;width:14.5px;height:6.5px;background:#4a5a5b;box-shadow:0 0 0 1px #2e3a3b"></div>
<div class="a" style="left:183px;top:1186.5px;width:11.5px;height:7.3px;background:#4a5a5b;box-shadow:0 0 0 1px #2e3a3b"></div>
<div class="a" style="left:200px;top:1176.7px;width:30px;height:18.6px;border-radius:3px;background:#6f8c8f;box-shadow:0 0 0 1px rgba(90,110,112,.8)"></div>
<svg class="a" style="left:245px;top:1178px" width="15" height="16" viewBox="0 0 15 16">
<path d="M1.5 1.5 H13.5 V15 H1.5 Z" fill="#f6f6f6" stroke="#888" stroke-width=".8"/><rect x="2.5" y="4" width="10" height="4.5" fill="#3a8ce0"/><rect x="2.5" y="9.5" width="10" height="4.5" fill="#3a8ce0"/><rect x="5.5" y="4.5" width="4" height="1.3" fill="#fff"/><rect x="5.5" y="10" width="4" height="1.3" fill="#fff"/></svg>
<div class="t" style="left:266.20px;top:1180.45px;font-size:12.5px;line-height:12.5px;color:#141b1c;letter-spacing:-0.227px;">Desktop – Dolphin</div>
<svg class="a" style="left:541px;top:1178px" width="18" height="15" viewBox="0 0 18 15">
<path d="M9 1 C14 1 17 3.5 17 6.8 C17 10 14 12.5 9 12.5 C7.5 12.5 6 12.2 5 11.8 L1.5 14 L2.5 10.8 C1.5 9.8 1 8.4 1 6.8 C1 3.5 4 1 9 1 Z" fill="#111"/>
<path d="M4 5 H8 L13 3.5 V10 L8 8.5 H4 Z" fill="#fff"/></svg>
<div class="t" style="left:562.40px;top:1180.45px;font-size:12.5px;line-height:12.5px;color:#141b1c;letter-spacing:-0.098px;">#siduction – Konversation</div>
<div class="a" style="left:832.6px;top:1173.4px;width:291px;height:23px;border-radius:3px;background:linear-gradient(180deg,rgba(215,235,238,.55),rgba(185,215,220,.45));box-shadow:0 0 0 1px rgba(120,150,155,.55)"></div>
<svg class="a" style="left:839px;top:1177px" width="17" height="17" viewBox="0 0 18 18">
<path d="M2.5 15.5 L9 9" stroke="#444" stroke-width="2.2" stroke-linecap="round"/><path d="M8.5 8.5 L14.5 14" stroke="#e8b800" stroke-width="3" stroke-linecap="round"/><path d="M8 9 L13 4" stroke="#999" stroke-width="1.6"/><circle cx="13.5" cy="3.5" r="2.2" fill="none" stroke="#aaa" stroke-width="1.4"/></svg>
<div class="t" style="left:860.10px;top:1180.45px;font-size:12.5px;line-height:12.5px;color:#141b1c;letter-spacing:-0.173px;">Stil – Systemeinstellungen</div>
<svg class="a" style="left:1672px;top:1176px" width="22" height="21" viewBox="0 0 22 21">
<circle cx="10.5" cy="10.5" r="9.6" fill="rgba(255,255,255,.1)" stroke="rgba(225,238,238,.75)" stroke-width=".9"/>
<path d="M8.6 10 L11 8.6 V17" stroke="#151515" stroke-width="1.5" fill="none"/><path d="M8.6 6.3 L10.6 4 L12.6 6.3 Z" fill="#151515"/></svg>
<svg class="a" style="left:1700px;top:1176px" width="24" height="21" viewBox="0 0 24 21">
<path d="M1 7.5 H5 L10 3 V18 L5 13.5 H1 Z" fill="#eef4f4" stroke="#555" stroke-width=".6"/>
<path d="M13 6.5 Q15.5 10.5 13 14.5 M16 4.5 Q19.5 10.5 16 16.5 M19 2.5 Q23.5 10.5 19 18.5" stroke="#eef4f4" stroke-width="1.6" fill="none"/></svg>
<div class="t" style="left:1726.20px;top:1176.70px;font-size:19px;line-height:19px;color:#eef5f5;letter-spacing:0.680px;">de</div>
<svg class="a" style="left:1756px;top:1176px" width="22" height="21" viewBox="0 0 22 21">
<rect x="4.5" y="1.5" width="13" height="10" fill="none" stroke="#eef4f4" stroke-width="1.6"/><path d="M11 12 V17 M1 17 H21" stroke="#eef4f4" stroke-width="1.6"/><circle cx="11" cy="17" r="2" fill="#eef4f4"/></svg>
<svg class="a" style="left:1788px;top:1184px" width="9" height="7"><path d="M.5 6 L4.5 1 L8.5 6 Z" fill="#eef4f4"/></svg>
<div class="t" style="left:1811.20px;top:1171.45px;font-size:19.5px;line-height:19.5px;color:#eef5f5;letter-spacing:0.497px;">10:25</div>
<div class="t" style="left:1812.50px;top:1189.50px;font-size:9px;line-height:9px;color:#1a2626;letter-spacing:-0.130px;">09.01.2015</div>
<svg class="a" style="left:1872px;top:1176px" width="20" height="21" viewBox="0 0 20 21">
<g stroke="#eef4f4" stroke-width="1.5" fill="none"><circle cx="4" cy="17" r="2.5"/><circle cx="16" cy="17" r="2.5"/><circle cx="10" cy="8" r="3"/><circle cx="15" cy="3" r="2"/><path d="M6 15.5 L8.5 10.5 M14 15.5 L11.5 10.5 M6.5 17 H13.5 M12 6 L13.8 4.2"/></g></svg>
<div class="a" style="left:1902px;top:1171px;width:44px;height:44px;border-radius:50%;background:rgba(160,205,212,.3);box-shadow:inset 0 0 0 1px rgba(220,240,242,.55),0 0 1px rgba(0,40,50,.3)"></div>
<svg class="a" style="left:1906px;top:1178px" width="14" height="16" viewBox="0 0 14 16"><path d="M6 1.5 Q1 4 2 10 Q4 14.5 9 13.5 Q12.5 12.5 11.5 9.5 Q10 8 7.5 9 Q4.5 9.5 4.5 5.5 Q4.5 3 6 1.5 Z" fill="rgba(215,232,235,.7)"/></svg>
<svg class="a" style="left:34px;top:16px" width="30" height="33" viewBox="0 0 30 33">
<path d="M1.3 2.3 L24.7 2.3 L27.3 29 L3.3 31 Z" fill="#b9b7b5" stroke="#8a8886" stroke-width=".8"/>
<path d="M3.3 31 L27.3 29 L27.5 30.5 L3.6 32.5 Z" fill="#f0f0f0" stroke="#999" stroke-width=".5"/>
<path d="M3 5 L23 4.5" stroke="#c86020" stroke-width=".8"/><path d="M5 3.8 L20 3.5" stroke="#555" stroke-width=".6"/>
<circle cx="14.70" cy="11.30" r="1.15" fill="#2a4a9a"/><circle cx="12.10" cy="13.90" r="1.15" fill="#2a4a9a"/><circle cx="17.30" cy="13.90" r="1.15" fill="#2a4a9a"/><circle cx="9.50" cy="16.50" r="1.15" fill="#2a4a9a"/><circle cx="14.70" cy="16.50" r="1.15" fill="#2a4a9a"/><circle cx="19.90" cy="16.50" r="1.15" fill="#2a4a9a"/><circle cx="12.10" cy="19.10" r="1.15" fill="#2a4a9a"/><circle cx="17.30" cy="19.10" r="1.15" fill="#2a4a9a"/><circle cx="14.70" cy="21.70" r="1.15" fill="#2a4a9a"/>
</svg>
<div class="t" style="left:21.00px;top:50.90px;font-size:12px;line-height:12px;color:#ffffff;text-shadow:0 0 2px #000,0 0 3px rgba(0,0,0,.8);letter-spacing:0.223px;">Handbuch</div>
<svg class="a" style="left:32px;top:104px" width="34" height="34" viewBox="0 0 34 34">
<path d="M16.5 2.5 H32.5 V18.5 H29 L31.5 23.5 L25 18.5 H16.5 Z" fill="#f4f4f4" stroke="#8a8a8a" stroke-width=".8"/>
<circle cx="24.50" cy="5.90" r="1.05" fill="#2a4a9a"/><circle cx="22.30" cy="8.10" r="1.05" fill="#2a4a9a"/><circle cx="26.70" cy="8.10" r="1.05" fill="#2a4a9a"/><circle cx="20.10" cy="10.30" r="1.05" fill="#2a4a9a"/><circle cx="24.50" cy="10.30" r="1.05" fill="#2a4a9a"/><circle cx="28.90" cy="10.30" r="1.05" fill="#2a4a9a"/><circle cx="22.30" cy="12.50" r="1.05" fill="#2a4a9a"/><circle cx="26.70" cy="12.50" r="1.05" fill="#2a4a9a"/><circle cx="24.50" cy="14.70" r="1.05" fill="#2a4a9a"/>
<path d="M1.5 11 H18 V27 H7 L2.5 32 L4 27 H1.5 Z" fill="#f4f4f4" stroke="#8a8a8a" stroke-width=".8"/>
<text x="5.5" y="24.5" font-family="Liberation Sans" font-weight="bold" font-size="13" fill="#f06010">?</text></svg>
<div class="t" style="left:39.00px;top:140.90px;font-size:12px;line-height:12px;color:#ffffff;text-shadow:0 0 2px #000,0 0 3px rgba(0,0,0,.8);letter-spacing:-0.224px;">IRC</div>
<div class="a" style="left:1887px;top:-43px;width:76px;height:76px;border-radius:50%;background:rgba(120,205,222,.55);box-shadow:inset 0 0 0 1.2px rgba(190,240,248,.75),0 0 1.5px 1px rgba(0,50,65,.45)"></div>
<svg class="a" style="left:1900px;top:3px" width="20" height="16" viewBox="0 0 20 16"><defs><linearGradient id="gCs" x1="0" y1="0" x2="1" y2="1"><stop offset="0" stop-color="#e8f0f0"/><stop offset="1" stop-color="#8aaab0"/></linearGradient></defs><path d="M7 2 Q1 5 2.5 11 Q5 15.5 10 14.5 Q14 13.5 13 10.5 Q12 9 9 10 Q5 10.5 5 6.5 Q5 3.5 7 2 Z" fill="url(#gCs)" stroke="rgba(90,120,125,.6)" stroke-width=".5"/><circle cx="9" cy="1.8" r=".7" fill="#777"/><circle cx="12" cy="1.6" r=".7" fill="#777"/><circle cx="14.5" cy="2.6" r=".7" fill="#777"/></svg>
</body></html>
